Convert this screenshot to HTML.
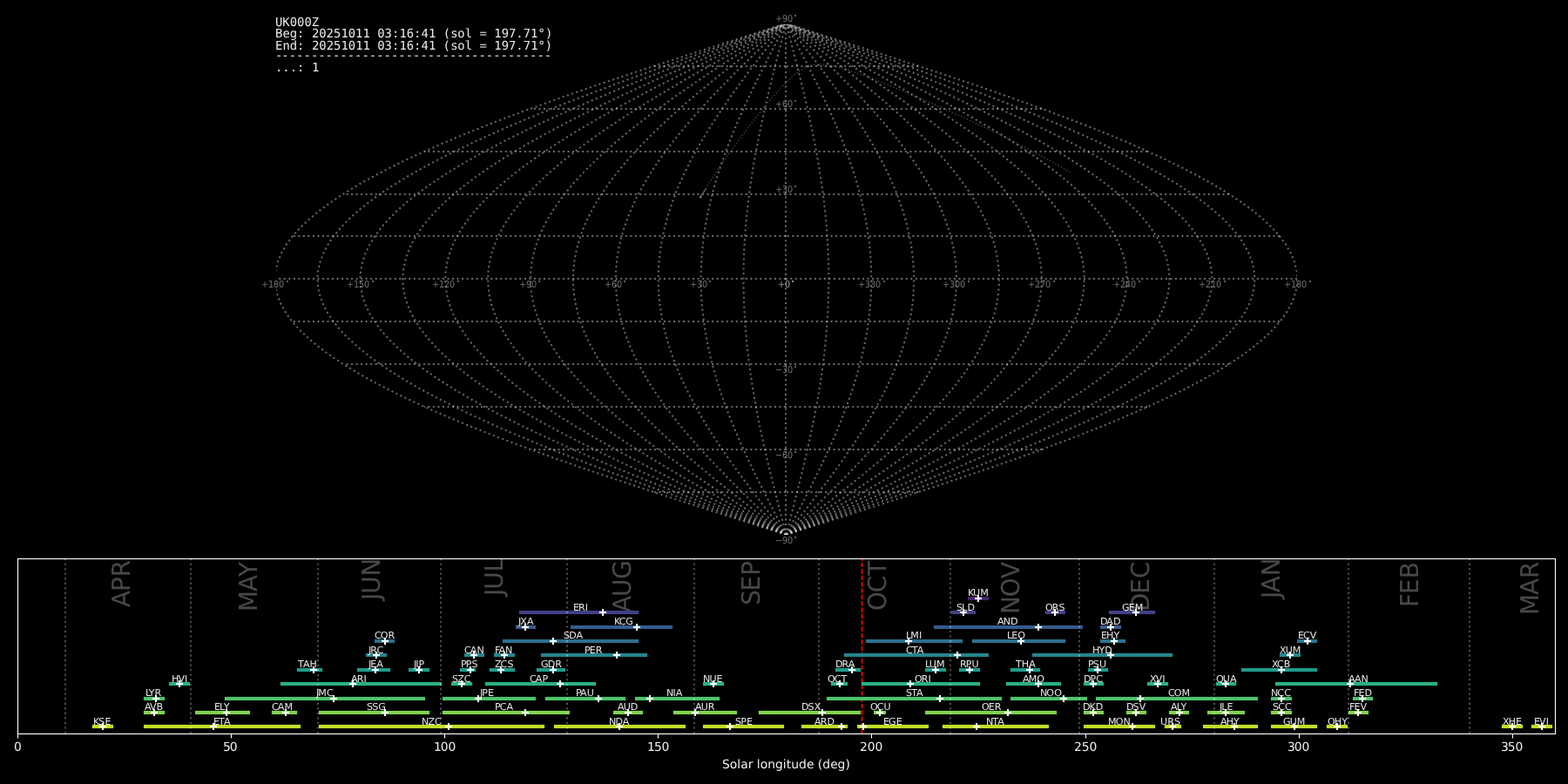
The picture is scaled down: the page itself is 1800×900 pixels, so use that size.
<!DOCTYPE html>
<html lang="en"><head><meta charset="utf-8"><title>Shower association UK000Z</title>
<style>html,body{margin:0;padding:0;background:#000;width:1800px;height:900px;overflow:hidden}svg text{white-space:pre;font-kerning:normal}</style></head>
<body>
<svg xmlns="http://www.w3.org/2000/svg" width="1800" height="900" viewBox="0 0 1800 900" text-rendering="geometricPrecision" shape-rendering="geometricPrecision" style="display:block;position:absolute;left:0;top:0;will-change:transform"><clipPath id="c0"><rect x="317" y="28" width="1172" height="586"/></clipPath><clipPath id="c1"><rect x="20" y="641" width="1765" height="201"/></clipPath>
<g clip-path="url(#c0)">
<path d="M1228.56 198.01L1219.59 192.72L1210.4 187.45L1200.98 182.19L1191.34 176.95L1181.52 171.73L1171.5 166.53L1161.32 161.36L1150.98 156.21L1140.5 151.09L1129.9 146.01L1119.2 140.96L1108.42 135.96L1097.57 131.01L1086.69 126.12L1075.8 121.3L1064.93 116.56L1054.11 111.91L1043.37 107.37L1032.77 102.96L1022.35 98.7L1012.15 94.62L1002.23 90.75L992.66 87.15L983.5 83.85L974.82 80.91L966.68 78.4L959.12 76.37L952.17 74.9L945.83 74.04L940.06 73.8L934.81 74.22L929.97 75.27L925.46 76.9L921.2 79.07L917.09 81.71L913.09 84.76L909.15 88.15L905.24 91.84L901.34 95.77L897.43 99.9L893.52 104.21L889.6 108.66L885.66 113.24L881.72 117.91L877.77 122.68L873.83 127.52L869.88 132.43L865.94 137.39L862.02 142.41L858.11 147.46L854.22 152.56L850.35 157.69L846.52 162.84L842.72 168.02L838.96 173.23L835.24 178.46L831.56 183.7L827.94 188.96L824.37 194.24L820.86 199.53L817.41 204.83L814.03 210.15L810.72 215.47" fill="none" stroke="#666666" stroke-opacity="0.7" stroke-width="1.3889" stroke-dasharray="1.3889 2.2917" stroke-linejoin="round"/>
<path d="M902 614L902 604L902 594L902 584L902 575L902 565L902 555L902 545L902 536L902 526L902 516L902 506L902 496L902 487L902 477L902 467L902 457L902 447L902 438L902 428L902 418L902 408L902 399L902 389L902 379L902 369L902 359L902 350L902 340L902 330L902 320L902 311L902 301L902 291L902 281L902 271L902 262L902 252L902 242L902 232L902 223L902 213L902 203L902 193L902 183L902 174L902 164L902 154L902 144L902 135L902 125L902 115L902 105L902 95L902 86L902 76L902 66L902 56L902 47L902 37L902 27" fill="none" stroke="#cccccc" stroke-opacity="0.5" stroke-width="2.0833" stroke-dasharray="2.0833 3.4375" stroke-linejoin="round"/>
<path d="M902.43 613.76L899.87 603.98L897.32 594.2L894.78 584.42L892.26 574.64L889.77 564.86L887.32 555.08L884.91 545.3L882.54 535.52L880.23 525.74L877.98 515.96L875.8 506.18L873.69 496.4L871.66 486.62L869.71 476.83L867.85 467.05L866.09 457.27L864.43 447.49L862.87 437.71L861.42 427.93L860.08 418.15L858.86 408.37L857.76 398.59L856.78 388.81L855.92 379.03L855.19 369.25L854.6 359.47L854.13 349.69L853.8 339.91L853.6 330.13L853.53 320.35L853.6 310.57L853.8 300.79L854.13 291.01L854.6 281.23L855.19 271.45L855.92 261.67L856.78 251.89L857.76 242.11L858.86 232.33L860.08 222.55L861.42 212.77L862.87 202.99L864.43 193.21L866.09 183.43L867.85 173.65L869.71 163.87L871.66 154.08L873.69 144.3L875.8 134.52L877.98 124.74L880.23 114.96L882.54 105.18L884.91 95.4L887.32 85.62L889.77 75.84L892.26 66.06L894.78 56.28L897.32 46.5L899.87 36.72L902.43 26.94" fill="none" stroke="#cccccc" stroke-opacity="0.5" stroke-width="2.0833" stroke-dasharray="2.0833 3.4375" stroke-linejoin="round"/>
<path d="M902.43 613.76L897.31 603.98L892.21 594.2L887.13 584.42L882.1 574.64L877.12 564.86L872.21 555.08L867.38 545.3L862.65 535.52L858.03 525.74L853.53 515.96L849.16 506.18L844.94 496.4L840.88 486.62L836.99 476.83L833.27 467.05L829.75 457.27L826.42 447.49L823.31 437.71L820.41 427.93L817.73 418.15L815.29 408.37L813.08 398.59L811.12 388.81L809.41 379.03L807.96 369.25L806.76 359.47L805.83 349.69L805.16 339.91L804.76 330.13L804.63 320.35L804.76 310.57L805.16 300.79L805.83 291.01L806.76 281.23L807.96 271.45L809.41 261.67L811.12 251.89L813.08 242.11L815.29 232.33L817.73 222.55L820.41 212.77L823.31 202.99L826.42 193.21L829.75 183.43L833.27 173.65L836.99 163.87L840.88 154.08L844.94 144.3L849.16 134.52L853.53 124.74L858.03 114.96L862.65 105.18L867.38 95.4L872.21 85.62L877.12 75.84L882.1 66.06L887.13 56.28L892.21 46.5L897.31 36.72L902.43 26.94" fill="none" stroke="#cccccc" stroke-opacity="0.5" stroke-width="2.0833" stroke-dasharray="2.0833 3.4375" stroke-linejoin="round"/>
<path d="M902.43 613.76L894.75 603.98L887.1 594.2L879.48 584.42L871.93 574.64L864.46 564.86L857.1 555.08L849.86 545.3L842.76 535.52L835.83 525.74L829.08 515.96L822.53 506.18L816.2 496.4L810.11 486.62L804.27 476.83L798.69 467.05L793.41 457.27L788.42 447.49L783.74 437.71L779.39 427.93L775.38 418.15L771.72 408.37L768.41 398.59L765.47 388.81L762.91 379.03L760.72 369.25L758.93 359.47L757.53 349.69L756.53 339.91L755.93 330.13L755.73 320.35L755.93 310.57L756.53 300.79L757.53 291.01L758.93 281.23L760.72 271.45L762.91 261.67L765.47 251.89L768.41 242.11L771.72 232.33L775.38 222.55L779.39 212.77L783.74 202.99L788.42 193.21L793.41 183.43L798.69 173.65L804.27 163.87L810.11 154.08L816.2 144.3L822.53 134.52L829.08 124.74L835.83 114.96L842.76 105.18L849.86 95.4L857.1 85.62L864.46 75.84L871.93 66.06L879.48 56.28L887.1 46.5L894.75 36.72L902.43 26.94" fill="none" stroke="#cccccc" stroke-opacity="0.5" stroke-width="2.0833" stroke-dasharray="2.0833 3.4375" stroke-linejoin="round"/>
<path d="M902.43 613.76L892.19 603.98L881.98 594.2L871.83 584.42L861.76 574.64L851.8 564.86L841.98 555.08L832.33 545.3L822.87 535.52L813.63 525.74L804.63 515.96L795.9 506.18L787.46 496.4L779.33 486.62L771.54 476.83L764.12 467.05L757.07 457.27L750.42 447.49L744.18 437.71L738.38 427.93L733.03 418.15L728.14 408.37L723.74 398.59L719.82 388.81L716.4 379.03L713.49 369.25L711.1 359.47L709.23 349.69L707.9 339.91L707.09 330.13L706.82 320.35L707.09 310.57L707.9 300.79L709.23 291.01L711.1 281.23L713.49 271.45L716.4 261.67L719.82 251.89L723.74 242.11L728.14 232.33L733.03 222.55L738.38 212.77L744.18 202.99L750.42 193.21L757.07 183.43L764.12 173.65L771.54 163.87L779.33 154.08L787.46 144.3L795.9 134.52L804.63 124.74L813.63 114.96L822.87 105.18L832.33 95.4L841.98 85.62L851.8 75.84L861.76 66.06L871.83 56.28L881.98 46.5L892.19 36.72L902.43 26.94" fill="none" stroke="#cccccc" stroke-opacity="0.5" stroke-width="2.0833" stroke-dasharray="2.0833 3.4375" stroke-linejoin="round"/>
<path d="M902.43 613.76L889.63 603.98L876.87 594.2L864.18 584.42L851.59 574.64L839.15 564.86L826.87 555.08L814.81 545.3L802.98 535.52L791.43 525.74L780.18 515.96L769.26 506.18L758.71 496.4L748.56 486.62L738.82 476.83L729.54 467.05L720.73 457.27L712.41 447.49L704.62 437.71L697.37 427.93L690.68 418.15L684.57 408.37L679.06 398.59L674.16 388.81L669.89 379.03L666.25 369.25L663.27 359.47L660.93 349.69L659.26 339.91L658.26 330.13L657.92 320.35L658.26 310.57L659.26 300.79L660.93 291.01L663.27 281.23L666.25 271.45L669.89 261.67L674.16 251.89L679.06 242.11L684.57 232.33L690.68 222.55L697.37 212.77L704.62 202.99L712.41 193.21L720.73 183.43L729.54 173.65L738.82 163.87L748.56 154.08L758.71 144.3L769.26 134.52L780.18 124.74L791.43 114.96L802.98 105.18L814.81 95.4L826.87 85.62L839.15 75.84L851.59 66.06L864.18 56.28L876.87 46.5L889.63 36.72L902.43 26.94" fill="none" stroke="#cccccc" stroke-opacity="0.5" stroke-width="2.0833" stroke-dasharray="2.0833 3.4375" stroke-linejoin="round"/>
<path d="M902.43 613.76L887.07 603.98L871.76 594.2L856.53 584.42L841.43 574.64L826.49 564.86L811.76 555.08L797.28 545.3L783.09 535.52L769.23 525.74L755.73 515.96L742.63 506.18L729.97 496.4L717.78 486.62L706.1 476.83L694.96 467.05L684.38 457.27L674.41 447.49L665.06 437.71L656.36 427.93L648.33 418.15L641 408.37L634.39 398.59L628.51 388.81L623.38 379.03L619.02 369.25L615.43 359.47L612.63 349.69L610.63 339.91L609.42 330.13L609.02 320.35L609.42 310.57L610.63 300.79L612.63 291.01L615.43 281.23L619.02 271.45L623.38 261.67L628.51 251.89L634.39 242.11L641 232.33L648.33 222.55L656.36 212.77L665.06 202.99L674.41 193.21L684.38 183.43L694.96 173.65L706.1 163.87L717.78 154.08L729.97 144.3L742.63 134.52L755.73 124.74L769.23 114.96L783.09 105.18L797.28 95.4L811.76 85.62L826.49 75.84L841.43 66.06L856.53 56.28L871.76 46.5L887.07 36.72L902.43 26.94" fill="none" stroke="#cccccc" stroke-opacity="0.5" stroke-width="2.0833" stroke-dasharray="2.0833 3.4375" stroke-linejoin="round"/>
<path d="M902.43 613.76L884.51 603.98L866.65 594.2L848.88 584.42L831.26 574.64L813.83 564.86L796.65 555.08L779.76 545.3L763.2 535.52L747.02 525.74L731.27 515.96L715.99 506.18L701.22 496.4L687.01 486.62L673.38 476.83L660.38 467.05L648.04 457.27L636.4 447.49L625.49 437.71L615.34 427.93L605.98 418.15L597.43 408.37L589.71 398.59L582.86 388.81L576.87 379.03L571.78 369.25L567.6 359.47L564.33 349.69L561.99 339.91L560.59 330.13L560.12 320.35L560.59 310.57L561.99 300.79L564.33 291.01L567.6 281.23L571.78 271.45L576.87 261.67L582.86 251.89L589.71 242.11L597.43 232.33L605.98 222.55L615.34 212.77L625.49 202.99L636.4 193.21L648.04 183.43L660.38 173.65L673.38 163.87L687.01 154.08L701.22 144.3L715.99 134.52L731.27 124.74L747.02 114.96L763.2 105.18L779.76 95.4L796.65 85.62L813.83 75.84L831.26 66.06L848.88 56.28L866.65 46.5L884.51 36.72L902.43 26.94" fill="none" stroke="#cccccc" stroke-opacity="0.5" stroke-width="2.0833" stroke-dasharray="2.0833 3.4375" stroke-linejoin="round"/>
<path d="M902.43 613.76L881.96 603.98L861.54 594.2L841.23 584.42L821.09 574.64L801.18 564.86L781.54 555.08L762.23 545.3L743.31 535.52L724.82 525.74L706.82 515.96L689.36 506.18L672.48 496.4L656.23 486.62L640.66 476.83L625.8 467.05L611.7 457.27L598.4 447.49L585.93 437.71L574.33 427.93L563.63 418.15L553.86 408.37L545.04 398.59L537.2 388.81L530.37 379.03L524.55 369.25L519.77 359.47L516.03 349.69L513.36 339.91L511.75 330.13L511.22 320.35L511.75 310.57L513.36 300.79L516.03 291.01L519.77 281.23L524.55 271.45L530.37 261.67L537.2 251.89L545.04 242.11L553.86 232.33L563.63 222.55L574.33 212.77L585.93 202.99L598.4 193.21L611.7 183.43L625.8 173.65L640.66 163.87L656.23 154.08L672.48 144.3L689.36 134.52L706.82 124.74L724.82 114.96L743.31 105.18L762.23 95.4L781.54 85.62L801.18 75.84L821.09 66.06L841.23 56.28L861.54 46.5L881.96 36.72L902.43 26.94" fill="none" stroke="#cccccc" stroke-opacity="0.5" stroke-width="2.0833" stroke-dasharray="2.0833 3.4375" stroke-linejoin="round"/>
<path d="M902.43 613.76L879.4 603.98L856.43 594.2L833.58 584.42L810.93 574.64L788.52 564.86L766.43 555.08L744.71 545.3L723.42 535.52L702.62 525.74L682.37 515.96L662.73 506.18L643.74 496.4L625.46 486.62L607.94 476.83L591.22 467.05L575.36 457.27L560.4 447.49L546.37 437.71L533.32 427.93L521.28 418.15L510.29 408.37L500.37 398.59L491.55 388.81L483.86 379.03L477.31 369.25L471.93 359.47L467.74 349.69L464.73 339.91L462.92 330.13L462.32 320.35L462.92 310.57L464.73 300.79L467.74 291.01L471.93 281.23L477.31 271.45L483.86 261.67L491.55 251.89L500.37 242.11L510.29 232.33L521.28 222.55L533.32 212.77L546.37 202.99L560.4 193.21L575.36 183.43L591.22 173.65L607.94 163.87L625.46 154.08L643.74 144.3L662.73 134.52L682.37 124.74L702.62 114.96L723.42 105.18L744.71 95.4L766.43 85.62L788.52 75.84L810.93 66.06L833.58 56.28L856.43 46.5L879.4 36.72L902.43 26.94" fill="none" stroke="#cccccc" stroke-opacity="0.5" stroke-width="2.0833" stroke-dasharray="2.0833 3.4375" stroke-linejoin="round"/>
<path d="M902.43 613.76L876.84 603.98L851.31 594.2L825.93 584.42L800.76 574.64L775.86 564.86L751.32 555.08L727.18 545.3L703.53 535.52L680.42 525.74L657.92 515.96L636.09 506.18L614.99 496.4L594.68 486.62L575.22 476.83L556.64 467.05L539.02 457.27L522.39 447.49L506.81 437.71L492.31 427.93L478.93 418.15L466.71 408.37L455.69 398.59L445.9 388.81L437.35 379.03L430.08 369.25L424.1 359.47L419.44 349.69L416.09 339.91L414.09 330.13L413.41 320.35L414.09 310.57L416.09 300.79L419.44 291.01L424.1 281.23L430.08 271.45L437.35 261.67L445.9 251.89L455.69 242.11L466.71 232.33L478.93 222.55L492.31 212.77L506.81 202.99L522.39 193.21L539.02 183.43L556.64 173.65L575.22 163.87L594.68 154.08L614.99 144.3L636.09 134.52L657.92 124.74L680.42 114.96L703.53 105.18L727.18 95.4L751.32 85.62L775.86 75.84L800.76 66.06L825.93 56.28L851.31 46.5L876.84 36.72L902.43 26.94" fill="none" stroke="#cccccc" stroke-opacity="0.5" stroke-width="2.0833" stroke-dasharray="2.0833 3.4375" stroke-linejoin="round"/>
<path d="M902.43 613.76L874.28 603.98L846.2 594.2L818.28 584.42L790.59 574.64L763.21 564.86L736.2 555.08L709.66 545.3L683.64 535.52L658.22 525.74L633.47 515.96L609.46 506.18L586.25 496.4L563.91 486.62L542.49 476.83L522.07 467.05L502.68 457.27L484.39 447.49L467.25 437.71L451.3 427.93L436.58 418.15L423.14 408.37L411.02 398.59L400.24 388.81L390.84 379.03L382.84 369.25L376.27 359.47L371.14 349.69L367.46 339.91L365.25 330.13L364.51 320.35L365.25 310.57L367.46 300.79L371.14 291.01L376.27 281.23L382.84 271.45L390.84 261.67L400.24 251.89L411.02 242.11L423.14 232.33L436.58 222.55L451.3 212.77L467.25 202.99L484.39 193.21L502.68 183.43L522.07 173.65L542.49 163.87L563.91 154.08L586.25 144.3L609.46 134.52L633.47 124.74L658.22 114.96L683.64 105.18L709.66 95.4L736.2 85.62L763.21 75.84L790.59 66.06L818.28 56.28L846.2 46.5L874.28 36.72L902.43 26.94" fill="none" stroke="#cccccc" stroke-opacity="0.5" stroke-width="2.0833" stroke-dasharray="2.0833 3.4375" stroke-linejoin="round"/>
<path d="M902.43 613.76L871.72 603.98L841.09 594.2L810.63 584.42L780.42 574.64L750.55 564.86L721.09 555.08L692.13 545.3L663.75 535.52L636.02 525.74L609.02 515.96L582.83 506.18L557.51 496.4L533.13 486.62L509.77 476.83L487.49 467.05L466.34 457.27L446.39 447.49L427.68 437.71L410.28 427.93L394.23 418.15L379.57 408.37L366.35 398.59L354.59 388.81L344.33 379.03L335.61 369.25L328.44 359.47L322.84 349.69L318.83 339.91L316.42 330.13L315.61 320.35L316.42 310.57L318.83 300.79L322.84 291.01L328.44 281.23L335.61 271.45L344.33 261.67L354.59 251.89L366.35 242.11L379.57 232.33L394.23 222.55L410.28 212.77L427.68 202.99L446.39 193.21L466.34 183.43L487.49 173.65L509.77 163.87L533.13 154.08L557.51 144.3L582.83 134.52L609.02 124.74L636.02 114.96L663.75 105.18L692.13 95.4L721.09 85.62L750.55 75.84L780.42 66.06L810.63 56.28L841.09 46.5L871.72 36.72L902.43 26.94" fill="none" stroke="#cccccc" stroke-opacity="0.5" stroke-width="2.0833" stroke-dasharray="2.0833 3.4375" stroke-linejoin="round"/>
<path d="M902.43 613.76L933.14 603.98L963.77 594.2L994.23 584.42L1024.44 574.64L1054.31 564.86L1083.77 555.08L1112.73 545.3L1141.11 535.52L1168.84 525.74L1195.84 515.96L1222.03 506.18L1247.35 496.4L1271.73 486.62L1295.09 476.83L1317.37 467.05L1338.52 457.27L1358.47 447.49L1377.18 437.71L1394.58 427.93L1410.63 418.15L1425.29 408.37L1438.51 398.59L1450.27 388.81L1460.53 379.03L1469.25 369.25L1476.42 359.47L1482.02 349.69L1486.03 339.91L1488.44 330.13L1489.25 320.35L1488.44 310.57L1486.03 300.79L1482.02 291.01L1476.42 281.23L1469.25 271.45L1460.53 261.67L1450.27 251.89L1438.51 242.11L1425.29 232.33L1410.63 222.55L1394.58 212.77L1377.18 202.99L1358.47 193.21L1338.52 183.43L1317.37 173.65L1295.09 163.87L1271.73 154.08L1247.35 144.3L1222.03 134.52L1195.84 124.74L1168.84 114.96L1141.11 105.18L1112.73 95.4L1083.77 85.62L1054.31 75.84L1024.44 66.06L994.23 56.28L963.77 46.5L933.14 36.72L902.43 26.94" fill="none" stroke="#cccccc" stroke-opacity="0.5" stroke-width="2.0833" stroke-dasharray="2.0833 3.4375" stroke-linejoin="round"/>
<path d="M902.43 613.76L930.58 603.98L958.66 594.2L986.58 584.42L1014.27 574.64L1041.65 564.86L1068.66 555.08L1095.2 545.3L1121.22 535.52L1146.64 525.74L1171.39 515.96L1195.4 506.18L1218.61 496.4L1240.95 486.62L1262.37 476.83L1282.79 467.05L1302.18 457.27L1320.47 447.49L1337.61 437.71L1353.56 427.93L1368.28 418.15L1381.72 408.37L1393.84 398.59L1404.62 388.81L1414.02 379.03L1422.02 369.25L1428.59 359.47L1433.72 349.69L1437.4 339.91L1439.61 330.13L1440.35 320.35L1439.61 310.57L1437.4 300.79L1433.72 291.01L1428.59 281.23L1422.02 271.45L1414.02 261.67L1404.62 251.89L1393.84 242.11L1381.72 232.33L1368.28 222.55L1353.56 212.77L1337.61 202.99L1320.47 193.21L1302.18 183.43L1282.79 173.65L1262.37 163.87L1240.95 154.08L1218.61 144.3L1195.4 134.52L1171.39 124.74L1146.64 114.96L1121.22 105.18L1095.2 95.4L1068.66 85.62L1041.65 75.84L1014.27 66.06L986.58 56.28L958.66 46.5L930.58 36.72L902.43 26.94" fill="none" stroke="#cccccc" stroke-opacity="0.5" stroke-width="2.0833" stroke-dasharray="2.0833 3.4375" stroke-linejoin="round"/>
<path d="M902.43 613.76L928.02 603.98L953.55 594.2L978.93 584.42L1004.1 574.64L1029 564.86L1053.54 555.08L1077.68 545.3L1101.33 535.52L1124.44 525.74L1146.94 515.96L1168.77 506.18L1189.87 496.4L1210.18 486.62L1229.64 476.83L1248.22 467.05L1265.84 457.27L1282.47 447.49L1298.05 437.71L1312.55 427.93L1325.93 418.15L1338.15 408.37L1349.17 398.59L1358.96 388.81L1367.51 379.03L1374.78 369.25L1380.76 359.47L1385.42 349.69L1388.77 339.91L1390.77 330.13L1391.44 320.35L1390.77 310.57L1388.77 300.79L1385.42 291.01L1380.76 281.23L1374.78 271.45L1367.51 261.67L1358.96 251.89L1349.17 242.11L1338.15 232.33L1325.93 222.55L1312.55 212.77L1298.05 202.99L1282.47 193.21L1265.84 183.43L1248.22 173.65L1229.64 163.87L1210.18 154.08L1189.87 144.3L1168.77 134.52L1146.94 124.74L1124.44 114.96L1101.33 105.18L1077.68 95.4L1053.54 85.62L1029 75.84L1004.1 66.06L978.93 56.28L953.55 46.5L928.02 36.72L902.43 26.94" fill="none" stroke="#cccccc" stroke-opacity="0.5" stroke-width="2.0833" stroke-dasharray="2.0833 3.4375" stroke-linejoin="round"/>
<path d="M902.43 613.76L925.46 603.98L948.43 594.2L971.28 584.42L993.93 574.64L1016.34 564.86L1038.43 555.08L1060.15 545.3L1081.44 535.52L1102.24 525.74L1122.49 515.96L1142.13 506.18L1161.12 496.4L1179.4 486.62L1196.92 476.83L1213.64 467.05L1229.5 457.27L1244.46 447.49L1258.49 437.71L1271.54 427.93L1283.58 418.15L1294.57 408.37L1304.49 398.59L1313.31 388.81L1321 379.03L1327.55 369.25L1332.93 359.47L1337.12 349.69L1340.13 339.91L1341.94 330.13L1342.54 320.35L1341.94 310.57L1340.13 300.79L1337.12 291.01L1332.93 281.23L1327.55 271.45L1321 261.67L1313.31 251.89L1304.49 242.11L1294.57 232.33L1283.58 222.55L1271.54 212.77L1258.49 202.99L1244.46 193.21L1229.5 183.43L1213.64 173.65L1196.92 163.87L1179.4 154.08L1161.12 144.3L1142.13 134.52L1122.49 124.74L1102.24 114.96L1081.44 105.18L1060.15 95.4L1038.43 85.62L1016.34 75.84L993.93 66.06L971.28 56.28L948.43 46.5L925.46 36.72L902.43 26.94" fill="none" stroke="#cccccc" stroke-opacity="0.5" stroke-width="2.0833" stroke-dasharray="2.0833 3.4375" stroke-linejoin="round"/>
<path d="M902.43 613.76L922.9 603.98L943.32 594.2L963.63 584.42L983.77 574.64L1003.68 564.86L1023.32 555.08L1042.63 545.3L1061.55 535.52L1080.04 525.74L1098.04 515.96L1115.5 506.18L1132.38 496.4L1148.63 486.62L1164.2 476.83L1179.06 467.05L1193.16 457.27L1206.46 447.49L1218.93 437.71L1230.53 427.93L1241.23 418.15L1251 408.37L1259.82 398.59L1267.66 388.81L1274.49 379.03L1280.31 369.25L1285.09 359.47L1288.83 349.69L1291.5 339.91L1293.11 330.13L1293.64 320.35L1293.11 310.57L1291.5 300.79L1288.83 291.01L1285.09 281.23L1280.31 271.45L1274.49 261.67L1267.66 251.89L1259.82 242.11L1251 232.33L1241.23 222.55L1230.53 212.77L1218.93 202.99L1206.46 193.21L1193.16 183.43L1179.06 173.65L1164.2 163.87L1148.63 154.08L1132.38 144.3L1115.5 134.52L1098.04 124.74L1080.04 114.96L1061.55 105.18L1042.63 95.4L1023.32 85.62L1003.68 75.84L983.77 66.06L963.63 56.28L943.32 46.5L922.9 36.72L902.43 26.94" fill="none" stroke="#cccccc" stroke-opacity="0.5" stroke-width="2.0833" stroke-dasharray="2.0833 3.4375" stroke-linejoin="round"/>
<path d="M902.43 613.76L920.35 603.98L938.21 594.2L955.98 584.42L973.6 574.64L991.03 564.86L1008.21 555.08L1025.1 545.3L1041.66 535.52L1057.84 525.74L1073.59 515.96L1088.87 506.18L1103.64 496.4L1117.85 486.62L1131.48 476.83L1144.48 467.05L1156.82 457.27L1168.46 447.49L1179.37 437.71L1189.52 427.93L1198.88 418.15L1207.43 408.37L1215.15 398.59L1222 388.81L1227.99 379.03L1233.08 369.25L1237.26 359.47L1240.53 349.69L1242.87 339.91L1244.27 330.13L1244.74 320.35L1244.27 310.57L1242.87 300.79L1240.53 291.01L1237.26 281.23L1233.08 271.45L1227.99 261.67L1222 251.89L1215.15 242.11L1207.43 232.33L1198.88 222.55L1189.52 212.77L1179.37 202.99L1168.46 193.21L1156.82 183.43L1144.48 173.65L1131.48 163.87L1117.85 154.08L1103.64 144.3L1088.87 134.52L1073.59 124.74L1057.84 114.96L1041.66 105.18L1025.1 95.4L1008.21 85.62L991.03 75.84L973.6 66.06L955.98 56.28L938.21 46.5L920.35 36.72L902.43 26.94" fill="none" stroke="#cccccc" stroke-opacity="0.5" stroke-width="2.0833" stroke-dasharray="2.0833 3.4375" stroke-linejoin="round"/>
<path d="M902.43 613.76L917.79 603.98L933.1 594.2L948.33 584.42L963.43 574.64L978.37 564.86L993.1 555.08L1007.58 545.3L1021.77 535.52L1035.63 525.74L1049.13 515.96L1062.23 506.18L1074.89 496.4L1087.08 486.62L1098.76 476.83L1109.9 467.05L1120.48 457.27L1130.45 447.49L1139.8 437.71L1148.5 427.93L1156.53 418.15L1163.86 408.37L1170.47 398.59L1176.35 388.81L1181.48 379.03L1185.84 369.25L1189.43 359.47L1192.23 349.69L1194.23 339.91L1195.44 330.13L1195.84 320.35L1195.44 310.57L1194.23 300.79L1192.23 291.01L1189.43 281.23L1185.84 271.45L1181.48 261.67L1176.35 251.89L1170.47 242.11L1163.86 232.33L1156.53 222.55L1148.5 212.77L1139.8 202.99L1130.45 193.21L1120.48 183.43L1109.9 173.65L1098.76 163.87L1087.08 154.08L1074.89 144.3L1062.23 134.52L1049.13 124.74L1035.63 114.96L1021.77 105.18L1007.58 95.4L993.1 85.62L978.37 75.84L963.43 66.06L948.33 56.28L933.1 46.5L917.79 36.72L902.43 26.94" fill="none" stroke="#cccccc" stroke-opacity="0.5" stroke-width="2.0833" stroke-dasharray="2.0833 3.4375" stroke-linejoin="round"/>
<path d="M902.43 613.76L915.23 603.98L927.99 594.2L940.68 584.42L953.27 574.64L965.71 564.86L977.99 555.08L990.05 545.3L1001.88 535.52L1013.43 525.74L1024.68 515.96L1035.6 506.18L1046.15 496.4L1056.3 486.62L1066.04 476.83L1075.32 467.05L1084.13 457.27L1092.45 447.49L1100.24 437.71L1107.49 427.93L1114.18 418.15L1120.29 408.37L1125.8 398.59L1130.7 388.81L1134.97 379.03L1138.61 369.25L1141.59 359.47L1143.93 349.69L1145.6 339.91L1146.6 330.13L1146.94 320.35L1146.6 310.57L1145.6 300.79L1143.93 291.01L1141.59 281.23L1138.61 271.45L1134.97 261.67L1130.7 251.89L1125.8 242.11L1120.29 232.33L1114.18 222.55L1107.49 212.77L1100.24 202.99L1092.45 193.21L1084.13 183.43L1075.32 173.65L1066.04 163.87L1056.3 154.08L1046.15 144.3L1035.6 134.52L1024.68 124.74L1013.43 114.96L1001.88 105.18L990.05 95.4L977.99 85.62L965.71 75.84L953.27 66.06L940.68 56.28L927.99 46.5L915.23 36.72L902.43 26.94" fill="none" stroke="#cccccc" stroke-opacity="0.5" stroke-width="2.0833" stroke-dasharray="2.0833 3.4375" stroke-linejoin="round"/>
<path d="M902.43 613.76L912.67 603.98L922.88 594.2L933.03 584.42L943.1 574.64L953.06 564.86L962.88 555.08L972.53 545.3L981.99 535.52L991.23 525.74L1000.23 515.96L1008.96 506.18L1017.4 496.4L1025.53 486.62L1033.32 476.83L1040.74 467.05L1047.79 457.27L1054.44 447.49L1060.68 437.71L1066.48 427.93L1071.83 418.15L1076.72 408.37L1081.12 398.59L1085.04 388.81L1088.46 379.03L1091.37 369.25L1093.76 359.47L1095.63 349.69L1096.96 339.91L1097.77 330.13L1098.04 320.35L1097.77 310.57L1096.96 300.79L1095.63 291.01L1093.76 281.23L1091.37 271.45L1088.46 261.67L1085.04 251.89L1081.12 242.11L1076.72 232.33L1071.83 222.55L1066.48 212.77L1060.68 202.99L1054.44 193.21L1047.79 183.43L1040.74 173.65L1033.32 163.87L1025.53 154.08L1017.4 144.3L1008.96 134.52L1000.23 124.74L991.23 114.96L981.99 105.18L972.53 95.4L962.88 85.62L953.06 75.84L943.1 66.06L933.03 56.28L922.88 46.5L912.67 36.72L902.43 26.94" fill="none" stroke="#cccccc" stroke-opacity="0.5" stroke-width="2.0833" stroke-dasharray="2.0833 3.4375" stroke-linejoin="round"/>
<path d="M902.43 613.76L910.11 603.98L917.76 594.2L925.38 584.42L932.93 574.64L940.4 564.86L947.76 555.08L955 545.3L962.1 535.52L969.03 525.74L975.78 515.96L982.33 506.18L988.66 496.4L994.75 486.62L1000.59 476.83L1006.17 467.05L1011.45 457.27L1016.44 447.49L1021.12 437.71L1025.47 427.93L1029.48 418.15L1033.14 408.37L1036.45 398.59L1039.39 388.81L1041.95 379.03L1044.14 369.25L1045.93 359.47L1047.33 349.69L1048.33 339.91L1048.93 330.13L1049.13 320.35L1048.93 310.57L1048.33 300.79L1047.33 291.01L1045.93 281.23L1044.14 271.45L1041.95 261.67L1039.39 251.89L1036.45 242.11L1033.14 232.33L1029.48 222.55L1025.47 212.77L1021.12 202.99L1016.44 193.21L1011.45 183.43L1006.17 173.65L1000.59 163.87L994.75 154.08L988.66 144.3L982.33 134.52L975.78 124.74L969.03 114.96L962.1 105.18L955 95.4L947.76 85.62L940.4 75.84L932.93 66.06L925.38 56.28L917.76 46.5L910.11 36.72L902.43 26.94" fill="none" stroke="#cccccc" stroke-opacity="0.5" stroke-width="2.0833" stroke-dasharray="2.0833 3.4375" stroke-linejoin="round"/>
<path d="M902.43 613.76L907.55 603.98L912.65 594.2L917.73 584.42L922.76 574.64L927.74 564.86L932.65 555.08L937.48 545.3L942.21 535.52L946.83 525.74L951.33 515.96L955.7 506.18L959.92 496.4L963.98 486.62L967.87 476.83L971.59 467.05L975.11 457.27L978.44 447.49L981.55 437.71L984.45 427.93L987.13 418.15L989.57 408.37L991.78 398.59L993.74 388.81L995.45 379.03L996.9 369.25L998.1 359.47L999.03 349.69L999.7 339.91L1000.1 330.13L1000.23 320.35L1000.1 310.57L999.7 300.79L999.03 291.01L998.1 281.23L996.9 271.45L995.45 261.67L993.74 251.89L991.78 242.11L989.57 232.33L987.13 222.55L984.45 212.77L981.55 202.99L978.44 193.21L975.11 183.43L971.59 173.65L967.87 163.87L963.98 154.08L959.92 144.3L955.7 134.52L951.33 124.74L946.83 114.96L942.21 105.18L937.48 95.4L932.65 85.62L927.74 75.84L922.76 66.06L917.73 56.28L912.65 46.5L907.55 36.72L902.43 26.94" fill="none" stroke="#cccccc" stroke-opacity="0.5" stroke-width="2.0833" stroke-dasharray="2.0833 3.4375" stroke-linejoin="round"/>
<path d="M902.43 613.76L904.99 603.98L907.54 594.2L910.08 584.42L912.6 574.64L915.09 564.86L917.54 555.08L919.95 545.3L922.32 535.52L924.63 525.74L926.88 515.96L929.06 506.18L931.17 496.4L933.2 486.62L935.15 476.83L937.01 467.05L938.77 457.27L940.43 447.49L941.99 437.71L943.44 427.93L944.78 418.15L946 408.37L947.1 398.59L948.08 388.81L948.94 379.03L949.67 369.25L950.26 359.47L950.73 349.69L951.06 339.91L951.26 330.13L951.33 320.35L951.26 310.57L951.06 300.79L950.73 291.01L950.26 281.23L949.67 271.45L948.94 261.67L948.08 251.89L947.1 242.11L946 232.33L944.78 222.55L943.44 212.77L941.99 202.99L940.43 193.21L938.77 183.43L937.01 173.65L935.15 163.87L933.2 154.08L931.17 144.3L929.06 134.52L926.88 124.74L924.63 114.96L922.32 105.18L919.95 95.4L917.54 85.62L915.09 75.84L912.6 66.06L910.08 56.28L907.54 46.5L904.99 36.72L902.43 26.94" fill="none" stroke="#cccccc" stroke-opacity="0.5" stroke-width="2.0833" stroke-dasharray="2.0833 3.4375" stroke-linejoin="round"/>
<path d="M902 614L902 614L902 614L902 614L902 614L902 614L902 614L902 614L902 614L902 614L902 614L902 614L902 614L902 614L902 614L902 614L902 614L902 614L902 614L902 614L902 614L902 614L902 614L902 614L902 614L902 614" fill="none" stroke="#cccccc" stroke-opacity="0.5" stroke-width="2.0833" stroke-dasharray="2.0833 3.4375" stroke-linejoin="round"/>
<path d="M902 565L890 565L877 565L864 565L852 565L839 565L826 565L814 565L801 565L789 565L776 565L763 565L751 565" fill="none" stroke="#cccccc" stroke-opacity="0.5" stroke-width="2.0833" stroke-dasharray="2.0833 3.4375" stroke-linejoin="round"/>
<path d="M902 565L751 565" fill="none" stroke="#cccccc" stroke-opacity="0.0208" stroke-width="4" stroke-dasharray="2.0833 3.4375"/>
<path d="M1054 565L1042 565L1029 565L1016 565L1004 565L991 565L978 565L966 565L953 565L940 565L928 565L915 565L902 565" fill="none" stroke="#cccccc" stroke-opacity="0.5" stroke-width="2.0833" stroke-dasharray="2.0833 3.4375" stroke-linejoin="round"/>
<path d="M1054 565L902 565" fill="none" stroke="#cccccc" stroke-opacity="0.0208" stroke-width="4" stroke-dasharray="2.0833 3.4375"/>
<path d="M902 516L878 516L854 516L829 516L805 516L780 516L756 516L731 516L707 516L682 516L658 516L633 516L609 516" fill="none" stroke="#cccccc" stroke-opacity="0.5" stroke-width="2.0833" stroke-dasharray="2.0833 3.4375" stroke-linejoin="round"/>
<path d="M902 516L609 516" fill="none" stroke="#cccccc" stroke-opacity="0.0208" stroke-width="4" stroke-dasharray="2.0833 3.4375"/>
<path d="M1196 516L1171 516L1147 516L1122 516L1098 516L1074 516L1049 516L1025 516L1000 516L976 516L951 516L927 516L902 516" fill="none" stroke="#cccccc" stroke-opacity="0.5" stroke-width="2.0833" stroke-dasharray="2.0833 3.4375" stroke-linejoin="round"/>
<path d="M1196 516L902 516" fill="none" stroke="#cccccc" stroke-opacity="0.0208" stroke-width="4" stroke-dasharray="2.0833 3.4375"/>
<path d="M902 467L868 467L833 467L799 467L764 467L730 467L695 467L660 467L626 467L591 467L557 467L522 467L487 467" fill="none" stroke="#cccccc" stroke-opacity="0.5" stroke-width="2.0833" stroke-dasharray="2.0833 3.4375" stroke-linejoin="round"/>
<path d="M902 467L487 467" fill="none" stroke="#cccccc" stroke-opacity="0.0208" stroke-width="4" stroke-dasharray="2.0833 3.4375"/>
<path d="M1317 467L1283 467L1248 467L1214 467L1179 467L1144 467L1110 467L1075 467L1041 467L1006 467L972 467L937 467L902 467" fill="none" stroke="#cccccc" stroke-opacity="0.5" stroke-width="2.0833" stroke-dasharray="2.0833 3.4375" stroke-linejoin="round"/>
<path d="M1317 467L902 467" fill="none" stroke="#cccccc" stroke-opacity="0.0208" stroke-width="4" stroke-dasharray="2.0833 3.4375"/>
<path d="M902 418L860 418L818 418L775 418L733 418L691 418L648 418L606 418L564 418L521 418L479 418L437 418L394 418" fill="none" stroke="#cccccc" stroke-opacity="0.5" stroke-width="2.0833" stroke-dasharray="2.0833 3.4375" stroke-linejoin="round"/>
<path d="M902 418L394 418" fill="none" stroke="#cccccc" stroke-opacity="0.0208" stroke-width="4" stroke-dasharray="2.0833 3.4375"/>
<path d="M1411 418L1368 418L1326 418L1284 418L1241 418L1199 418L1157 418L1114 418L1072 418L1029 418L987 418L945 418L902 418" fill="none" stroke="#cccccc" stroke-opacity="0.5" stroke-width="2.0833" stroke-dasharray="2.0833 3.4375" stroke-linejoin="round"/>
<path d="M1411 418L902 418" fill="none" stroke="#cccccc" stroke-opacity="0.0208" stroke-width="4" stroke-dasharray="2.0833 3.4375"/>
<path d="M902 369L855 369L808 369L761 369L713 369L666 369L619 369L572 369L525 369L477 369L430 369L383 369L336 369" fill="none" stroke="#cccccc" stroke-opacity="0.5" stroke-width="2.0833" stroke-dasharray="2.0833 3.4375" stroke-linejoin="round"/>
<path d="M902 369L336 369" fill="none" stroke="#cccccc" stroke-opacity="0.0208" stroke-width="4" stroke-dasharray="2.0833 3.4375"/>
<path d="M1469 369L1422 369L1375 369L1328 369L1280 369L1233 369L1186 369L1139 369L1091 369L1044 369L997 369L950 369L902 369" fill="none" stroke="#cccccc" stroke-opacity="0.5" stroke-width="2.0833" stroke-dasharray="2.0833 3.4375" stroke-linejoin="round"/>
<path d="M1469 369L902 369" fill="none" stroke="#cccccc" stroke-opacity="0.0208" stroke-width="4" stroke-dasharray="2.0833 3.4375"/>
<path d="M902 320L854 320L805 320L756 320L707 320L658 320L609 320L560 320L511 320L462 320L413 320L365 320L316 320" fill="none" stroke="#cccccc" stroke-opacity="0.5" stroke-width="2.0833" stroke-dasharray="2.0833 3.4375" stroke-linejoin="round"/>
<path d="M902 320L316 320" fill="none" stroke="#cccccc" stroke-opacity="0.0208" stroke-width="4" stroke-dasharray="2.0833 3.4375"/>
<path d="M1489 320L1440 320L1391 320L1343 320L1294 320L1245 320L1196 320L1147 320L1098 320L1049 320L1000 320L951 320L902 320" fill="none" stroke="#cccccc" stroke-opacity="0.5" stroke-width="2.0833" stroke-dasharray="2.0833 3.4375" stroke-linejoin="round"/>
<path d="M1489 320L902 320" fill="none" stroke="#cccccc" stroke-opacity="0.0208" stroke-width="4" stroke-dasharray="2.0833 3.4375"/>
<path d="M902 271L855 271L808 271L761 271L713 271L666 271L619 271L572 271L525 271L477 271L430 271L383 271L336 271" fill="none" stroke="#cccccc" stroke-opacity="0.5" stroke-width="2.0833" stroke-dasharray="2.0833 3.4375" stroke-linejoin="round"/>
<path d="M902 271L336 271" fill="none" stroke="#cccccc" stroke-opacity="0.0208" stroke-width="4" stroke-dasharray="2.0833 3.4375"/>
<path d="M1469 271L1422 271L1375 271L1328 271L1280 271L1233 271L1186 271L1139 271L1091 271L1044 271L997 271L950 271L902 271" fill="none" stroke="#cccccc" stroke-opacity="0.5" stroke-width="2.0833" stroke-dasharray="2.0833 3.4375" stroke-linejoin="round"/>
<path d="M1469 271L902 271" fill="none" stroke="#cccccc" stroke-opacity="0.0208" stroke-width="4" stroke-dasharray="2.0833 3.4375"/>
<path d="M902 223L860 223L818 223L775 223L733 223L691 223L648 223L606 223L564 223L521 223L479 223L437 223L394 223" fill="none" stroke="#cccccc" stroke-opacity="0.5" stroke-width="2.0833" stroke-dasharray="2.0833 3.4375" stroke-linejoin="round"/>
<path d="M902 223L394 223" fill="none" stroke="#cccccc" stroke-opacity="0.0208" stroke-width="4" stroke-dasharray="2.0833 3.4375"/>
<path d="M1411 223L1368 223L1326 223L1284 223L1241 223L1199 223L1157 223L1114 223L1072 223L1029 223L987 223L945 223L902 223" fill="none" stroke="#cccccc" stroke-opacity="0.5" stroke-width="2.0833" stroke-dasharray="2.0833 3.4375" stroke-linejoin="round"/>
<path d="M1411 223L902 223" fill="none" stroke="#cccccc" stroke-opacity="0.0208" stroke-width="4" stroke-dasharray="2.0833 3.4375"/>
<path d="M902 174L868 174L833 174L799 174L764 174L730 174L695 174L660 174L626 174L591 174L557 174L522 174L487 174" fill="none" stroke="#cccccc" stroke-opacity="0.5" stroke-width="2.0833" stroke-dasharray="2.0833 3.4375" stroke-linejoin="round"/>
<path d="M902 174L487 174" fill="none" stroke="#cccccc" stroke-opacity="0.0208" stroke-width="4" stroke-dasharray="2.0833 3.4375"/>
<path d="M1317 174L1283 174L1248 174L1214 174L1179 174L1144 174L1110 174L1075 174L1041 174L1006 174L972 174L937 174L902 174" fill="none" stroke="#cccccc" stroke-opacity="0.5" stroke-width="2.0833" stroke-dasharray="2.0833 3.4375" stroke-linejoin="round"/>
<path d="M1317 174L902 174" fill="none" stroke="#cccccc" stroke-opacity="0.0208" stroke-width="4" stroke-dasharray="2.0833 3.4375"/>
<path d="M902 125L878 125L854 125L829 125L805 125L780 125L756 125L731 125L707 125L682 125L658 125L633 125L609 125" fill="none" stroke="#cccccc" stroke-opacity="0.5" stroke-width="2.0833" stroke-dasharray="2.0833 3.4375" stroke-linejoin="round"/>
<path d="M902 125L609 125" fill="none" stroke="#cccccc" stroke-opacity="0.0208" stroke-width="4" stroke-dasharray="2.0833 3.4375"/>
<path d="M1196 125L1171 125L1147 125L1122 125L1098 125L1074 125L1049 125L1025 125L1000 125L976 125L951 125L927 125L902 125" fill="none" stroke="#cccccc" stroke-opacity="0.5" stroke-width="2.0833" stroke-dasharray="2.0833 3.4375" stroke-linejoin="round"/>
<path d="M1196 125L902 125" fill="none" stroke="#cccccc" stroke-opacity="0.0208" stroke-width="4" stroke-dasharray="2.0833 3.4375"/>
<path d="M902 76L890 76L877 76L864 76L852 76L839 76L826 76L814 76L801 76L789 76L776 76L763 76L751 76" fill="none" stroke="#cccccc" stroke-opacity="0.5" stroke-width="2.0833" stroke-dasharray="2.0833 3.4375" stroke-linejoin="round"/>
<path d="M902 76L751 76" fill="none" stroke="#cccccc" stroke-opacity="0.0208" stroke-width="4" stroke-dasharray="2.0833 3.4375"/>
<path d="M1054 76L1042 76L1029 76L1016 76L1004 76L991 76L978 76L966 76L953 76L940 76L928 76L915 76L902 76" fill="none" stroke="#cccccc" stroke-opacity="0.5" stroke-width="2.0833" stroke-dasharray="2.0833 3.4375" stroke-linejoin="round"/>
<path d="M1054 76L902 76" fill="none" stroke="#cccccc" stroke-opacity="0.0208" stroke-width="4" stroke-dasharray="2.0833 3.4375"/>
<path d="M902 27L902 27L902 27L902 27L902 27L902 27L902 27L902 27L902 27L902 27L902 27L902 27L902 27L902 27L902 27L902 27L902 27L902 27L902 27L902 27L902 27L902 27L902 27L902 27L902 27L902 27" fill="none" stroke="#cccccc" stroke-opacity="0.5" stroke-width="2.0833" stroke-dasharray="2.0833 3.4375" stroke-linejoin="round"/>
</g>
<text transform="translate(0 624) scale(1 1.12)" x="889.91 898.05 903.97" xml:space="preserve" font-family="'DejaVu Sans','Liberation Sans',sans-serif" font-size="9.722" fill="#808080" fill-opacity="0.886">−90<tspan x="911.5" y="-2.6786" font-size="6.2" fill="#b0b0b0" fill-opacity="1">°</tspan></text>
<text transform="translate(0 526) scale(1 1.12)" x="889.88 898.02 903.94" xml:space="preserve" font-family="'DejaVu Sans','Liberation Sans',sans-serif" font-size="9.722" fill="#808080" fill-opacity="0.886">−60<tspan x="911.5" y="-2.6786" font-size="6.2" fill="#b0b0b0" fill-opacity="1">°</tspan></text>
<text transform="translate(0 428) scale(1 1.12)" x="889.94 898.08 904" xml:space="preserve" font-family="'DejaVu Sans','Liberation Sans',sans-serif" font-size="9.722" fill="#808080" fill-opacity="0.886">−30<tspan x="911.5" y="-2.6786" font-size="6.2" fill="#b0b0b0" fill-opacity="1">°</tspan></text>
<text transform="translate(0 330) scale(1 1.12)" x="893.02 900.91" xml:space="preserve" font-family="'DejaVu Sans','Liberation Sans',sans-serif" font-size="9.722" fill="#808080" fill-opacity="0.886">+0<tspan x="908.5" y="-2.6786" font-size="6.2" fill="#b0b0b0" fill-opacity="1">°</tspan></text>
<text transform="translate(0 221) scale(1 1.12)" x="890.07 897.96 903.88" xml:space="preserve" font-family="'DejaVu Sans','Liberation Sans',sans-serif" font-size="9.722" fill="#808080" fill-opacity="0.886">+30<tspan x="911.5" y="-2.6786" font-size="6.2" fill="#b0b0b0" fill-opacity="1">°</tspan></text>
<text transform="translate(0 123) scale(1 1.12)" x="890.04 897.93 904.1" xml:space="preserve" font-family="'DejaVu Sans','Liberation Sans',sans-serif" font-size="9.722" fill="#808080" fill-opacity="0.886">+60<tspan x="911.5" y="-2.6786" font-size="6.2" fill="#b0b0b0" fill-opacity="1">°</tspan></text>
<text transform="translate(0 25) scale(1 1.12)" x="890.08 897.97 903.89" xml:space="preserve" font-family="'DejaVu Sans','Liberation Sans',sans-serif" font-size="9.722" fill="#808080" fill-opacity="0.886">+90<tspan x="911.5" y="-2.6786" font-size="6.2" fill="#b0b0b0" fill-opacity="1">°</tspan></text>
<text transform="translate(0 330) scale(1 1.12)" x="893.02 900.91" xml:space="preserve" font-family="'DejaVu Sans','Liberation Sans',sans-serif" font-size="9.722" fill="#808080" fill-opacity="0.886">+0<tspan x="908.5" y="-2.6786" font-size="6.2" fill="#b0b0b0" fill-opacity="1">°</tspan></text>
<text transform="translate(0 330) scale(1 1.12)" x="792.11 800 805.92" xml:space="preserve" font-family="'DejaVu Sans','Liberation Sans',sans-serif" font-size="9.722" fill="#808080" fill-opacity="0.886">+30<tspan x="813.5" y="-2.6786" font-size="6.2" fill="#b0b0b0" fill-opacity="1">°</tspan></text>
<text transform="translate(0 330) scale(1 1.12)" x="694.1 701.99 707.91" xml:space="preserve" font-family="'DejaVu Sans','Liberation Sans',sans-serif" font-size="9.722" fill="#808080" fill-opacity="0.886">+60<tspan x="715.5" y="-2.6786" font-size="6.2" fill="#b0b0b0" fill-opacity="1">°</tspan></text>
<text transform="translate(0 330) scale(1 1.12)" x="596.06 603.95 610.12" xml:space="preserve" font-family="'DejaVu Sans','Liberation Sans',sans-serif" font-size="9.722" fill="#808080" fill-opacity="0.886">+90<tspan x="617.5" y="-2.6786" font-size="6.2" fill="#b0b0b0" fill-opacity="1">°</tspan></text>
<text transform="translate(0 330) scale(1 1.12)" x="495.9 504.04 509.96 515.9" xml:space="preserve" font-family="'DejaVu Sans','Liberation Sans',sans-serif" font-size="9.722" fill="#808080" fill-opacity="0.886">+120<tspan x="524.5" y="-2.6786" font-size="6.2" fill="#b0b0b0" fill-opacity="1">°</tspan></text>
<text transform="translate(0 330) scale(1 1.12)" x="397.96 406.1 412.02 417.96" xml:space="preserve" font-family="'DejaVu Sans','Liberation Sans',sans-serif" font-size="9.722" fill="#808080" fill-opacity="0.886">+150<tspan x="426.5" y="-2.6786" font-size="6.2" fill="#b0b0b0" fill-opacity="1">°</tspan></text>
<text transform="translate(0 330) scale(1 1.12)" x="299.88 308.02 313.94 319.88" xml:space="preserve" font-family="'DejaVu Sans','Liberation Sans',sans-serif" font-size="9.722" fill="#808080" fill-opacity="0.886">+180<tspan x="328.5" y="-2.6786" font-size="6.2" fill="#b0b0b0" fill-opacity="1">°</tspan></text>
<text transform="translate(0 330) scale(1 1.12)" x="1473.9 1482.04 1487.96 1493.9" xml:space="preserve" font-family="'DejaVu Sans','Liberation Sans',sans-serif" font-size="9.722" fill="#808080" fill-opacity="0.886">+180<tspan x="1502.5" y="-2.6786" font-size="6.2" fill="#b0b0b0" fill-opacity="1">°</tspan></text>
<text transform="translate(0 330) scale(1 1.12)" x="1375.98 1384.12 1390.04 1395.98" xml:space="preserve" font-family="'DejaVu Sans','Liberation Sans',sans-serif" font-size="9.722" fill="#808080" fill-opacity="0.886">+210<tspan x="1404.5" y="-2.6786" font-size="6.2" fill="#b0b0b0" fill-opacity="1">°</tspan></text>
<text transform="translate(0 330) scale(1 1.12)" x="1278.01 1285.9 1291.82 1298.01" xml:space="preserve" font-family="'DejaVu Sans','Liberation Sans',sans-serif" font-size="9.722" fill="#808080" fill-opacity="0.886">+240<tspan x="1306.5" y="-2.6786" font-size="6.2" fill="#b0b0b0" fill-opacity="1">°</tspan></text>
<text transform="translate(0 330) scale(1 1.12)" x="1179.9 1188.04 1193.96 1199.9" xml:space="preserve" font-family="'DejaVu Sans','Liberation Sans',sans-serif" font-size="9.722" fill="#808080" fill-opacity="0.886">+270<tspan x="1208.5" y="-2.6786" font-size="6.2" fill="#b0b0b0" fill-opacity="1">°</tspan></text>
<text transform="translate(0 330) scale(1 1.12)" x="1082.06 1089.95 1096.12 1102.06" xml:space="preserve" font-family="'DejaVu Sans','Liberation Sans',sans-serif" font-size="9.722" fill="#808080" fill-opacity="0.886">+300<tspan x="1110.5" y="-2.6786" font-size="6.2" fill="#b0b0b0" fill-opacity="1">°</tspan></text>
<text transform="translate(0 330) scale(1 1.12)" x="985 992.89 999.06 1005" xml:space="preserve" font-family="'DejaVu Sans','Liberation Sans',sans-serif" font-size="9.722" fill="#808080" fill-opacity="0.886">+330<tspan x="1013.5" y="-2.6786" font-size="6.2" fill="#b0b0b0" fill-opacity="1">°</tspan></text>
<g clip-path="url(#c0)">
<path d="M810.53 216.42L803.9 226.1" fill="none" stroke="#666666" stroke-width="1.3889" stroke-linecap="square" stroke-linejoin="round"/>
<path d="M804 226" fill="none" stroke="#8dd3c7" stroke-width="2.0833" stroke-linecap="square" stroke-linejoin="round"/>
<path d="M803.5 227.5L805.5 227.5L805.5 225.5L803.5 225.5Z" fill="#808080"/>
</g>
<text transform="translate(1468.63 687.7) rotate(-90) scale(1 1.03)" x="0.75 7.44 26.44" font-family="'DejaVu Sans','Liberation Sans',sans-serif" font-size="27.778" fill="#ffffff" fill-opacity="0.283">JAN</text>
<text transform="translate(1627.7 697.82) rotate(-90) scale(1 1.03)" x="0.75 15.72 33.5" font-family="'DejaVu Sans','Liberation Sans',sans-serif" font-size="27.778" fill="#ffffff" fill-opacity="0.283">FEB</text>
<text transform="translate(1765.68 706.4) rotate(-90) scale(1 1.03)" x="0.5 23.45 42.44" font-family="'DejaVu Sans','Liberation Sans',sans-serif" font-size="27.778" fill="#ffffff" fill-opacity="0.283">MAR</text>
<text transform="translate(148.67 697.85) rotate(-90) scale(1 1.03)" x="0.75 18.98 35.73" font-family="'DejaVu Sans','Liberation Sans',sans-serif" font-size="27.778" fill="#ffffff" fill-opacity="0.283">APR</text>
<text transform="translate(294.62 702.39) rotate(-90) scale(1 1.03)" x="0.5 23.45 40.28" font-family="'DejaVu Sans','Liberation Sans',sans-serif" font-size="27.778" fill="#ffffff" fill-opacity="0.283">MAY</text>
<text transform="translate(435.69 689.84) rotate(-90) scale(1 1.03)" x="0.75 8.19 28.25" font-family="'DejaVu Sans','Liberation Sans',sans-serif" font-size="27.778" fill="#ffffff" fill-opacity="0.283">JUN</text>
<text transform="translate(576.53 685.02) rotate(-90) scale(1 1.03)" x="1 8.19 28.5" font-family="'DejaVu Sans','Liberation Sans',sans-serif" font-size="27.778" fill="#ffffff" fill-opacity="0.283">JUL</text>
<text transform="translate(723.6 703.63) rotate(-90) scale(1 1.03)" x="0.75 18.73 38.81" font-family="'DejaVu Sans','Liberation Sans',sans-serif" font-size="27.778" fill="#ffffff" fill-opacity="0.283">AUG</text>
<text transform="translate(871.61 695.58) rotate(-90) scale(1 1.03)" x="0.75 17.11 34.91" font-family="'DejaVu Sans','Liberation Sans',sans-serif" font-size="27.778" fill="#ffffff" fill-opacity="0.283">SEP</text>
<text transform="translate(1016.66 701.71) rotate(-90) scale(1 1.03)" x="0.75 21.59 40.98" font-family="'DejaVu Sans','Liberation Sans',sans-serif" font-size="27.778" fill="#ffffff" fill-opacity="0.283">OCT</text>
<text transform="translate(1169.53 705.61) rotate(-90) scale(1 1.03)" x="0.5 20.27 41.62" font-family="'DejaVu Sans','Liberation Sans',sans-serif" font-size="27.778" fill="#ffffff" fill-opacity="0.283">NOV</text>
<text transform="translate(1318.52 702.66) rotate(-90) scale(1 1.03)" x="0.75 20.88 38.67" font-family="'DejaVu Sans','Liberation Sans',sans-serif" font-size="27.778" fill="#ffffff" fill-opacity="0.283">DEC</text>
<rect x="19.9444" y="842.5" width="1.1111" height="5" fill="#ffffff"/>
<text x="15.91" y="862" xml:space="preserve" font-family="'DejaVu Sans','Liberation Sans',sans-serif" font-size="13.889" fill="#ffffff" fill-opacity="0.938">0</text>
<rect x="264.9444" y="842.5" width="1.1111" height="5" fill="#ffffff"/>
<text x="255.89 263.7" y="862" xml:space="preserve" font-family="'DejaVu Sans','Liberation Sans',sans-serif" font-size="13.889" fill="#ffffff" fill-opacity="0.938">50</text>
<rect x="509.9444" y="842.5" width="1.1111" height="5" fill="#ffffff"/>
<text x="498.08 505.64 514.47" y="862" xml:space="preserve" font-family="'DejaVu Sans','Liberation Sans',sans-serif" font-size="13.889" fill="#ffffff" fill-opacity="0.938">100</text>
<rect x="754.9444" y="842.5" width="1.1111" height="5" fill="#ffffff"/>
<text x="743 751.06 759.39" y="862" xml:space="preserve" font-family="'DejaVu Sans','Liberation Sans',sans-serif" font-size="13.889" fill="#ffffff" fill-opacity="0.938">150</text>
<rect x="999.9444" y="842.5" width="1.1111" height="5" fill="#ffffff"/>
<text x="986.89 995.7 1004.53" y="862" xml:space="preserve" font-family="'DejaVu Sans','Liberation Sans',sans-serif" font-size="13.889" fill="#ffffff" fill-opacity="0.938">200</text>
<rect x="1245.9444" y="842.5" width="1.1111" height="5" fill="#ffffff"/>
<text x="1232.92 1241.73 1250.56" y="862" xml:space="preserve" font-family="'DejaVu Sans','Liberation Sans',sans-serif" font-size="13.889" fill="#ffffff" fill-opacity="0.938">250</text>
<rect x="1490.9444" y="842.5" width="1.1111" height="5" fill="#ffffff"/>
<text x="1478.04 1485.85 1494.43" y="862" xml:space="preserve" font-family="'DejaVu Sans','Liberation Sans',sans-serif" font-size="13.889" fill="#ffffff" fill-opacity="0.938">300</text>
<rect x="1735.9444" y="842.5" width="1.1111" height="5" fill="#ffffff"/>
<text x="1723.06 1730.87 1739.45" y="862" xml:space="preserve" font-family="'DejaVu Sans','Liberation Sans',sans-serif" font-size="13.889" fill="#ffffff" fill-opacity="0.938">350</text>
<text x="829.05 837.85 846.33 850.19 858.69 864.64 868.82 872.66 881.16 889.96 898.75 902.86 908.3 917.1 925.91 934.44 938.85 944.27 953.32 961.61 970.41" y="882" xml:space="preserve" font-family="'DejaVu Sans','Liberation Sans',sans-serif" font-size="13.889" fill="#ffffff" fill-opacity="0.938">Solar longitude (deg)</text>
<g clip-path="url(#c1)">
<path d="M989.5 842.5L989.5 792.5L989.5 741.5L989.5 691.5L989.5 641.5" fill="none" stroke="#ff0000" stroke-width="1.3889" stroke-dasharray="5.1389 2.2222" stroke-linejoin="round"/>
<path d="M989.5 842.5L989.5 792.5L989.5 741.5L989.5 691.5L989.5 641.5" fill="none" stroke="#ff0000" stroke-width="1.3889" stroke-dasharray="5.1389 2.2222" stroke-linejoin="round"/>
</g>
<rect x="19.9444" y="640.9444" width="1.1111" height="202.1111" fill="#ffffff"/>
<rect x="1784.9444" y="640.9444" width="1.1111" height="202.1111" fill="#ffffff"/>
<rect x="19.9444" y="841.9444" width="1766.1111" height="1.1111" fill="#ffffff"/>
<rect x="19.9444" y="640.9444" width="1766.1111" height="1.1111" fill="#ffffff"/>
<g clip-path="url(#c1)">
<rect x="105.9167" y="831.9167" width="24.1667" height="4.1667" fill="#bddf26"/>
</g>
<text transform="translate(0 832) scale(1 0.985)" x="107.01 113.29 120.59" xml:space="preserve" font-family="'DejaVu Sans','Liberation Sans',sans-serif" font-size="11.111" fill="#ffffff" fill-opacity="0.901">KSE</text>
<g clip-path="url(#c1)">
<rect x="164.9167" y="831.9167" width="180.1667" height="4.1667" fill="#bddf26"/>
</g>
<text transform="translate(0 832) scale(1 0.985)" x="244.89 250.91 257.08" xml:space="preserve" font-family="'DejaVu Sans','Liberation Sans',sans-serif" font-size="11.111" fill="#ffffff" fill-opacity="0.901">ETA</text>
<g clip-path="url(#c1)">
<rect x="365.9167" y="831.9167" width="259.1667" height="4.1667" fill="#bddf26"/>
</g>
<text transform="translate(0 832) scale(1 0.985)" x="484.12 491.42 499.03" xml:space="preserve" font-family="'DejaVu Sans','Liberation Sans',sans-serif" font-size="11.111" fill="#ffffff" fill-opacity="0.901">NZC</text>
<g clip-path="url(#c1)">
<rect x="635.9167" y="831.9167" width="151.1667" height="4.1667" fill="#bddf26"/>
</g>
<text transform="translate(0 832) scale(1 0.985)" x="698.93 706.48 714.84" xml:space="preserve" font-family="'DejaVu Sans','Liberation Sans',sans-serif" font-size="11.111" fill="#ffffff" fill-opacity="0.901">NDA</text>
<g clip-path="url(#c1)">
<rect x="806.9167" y="831.9167" width="93.1667" height="4.1667" fill="#bddf26"/>
</g>
<text transform="translate(0 832) scale(1 0.985)" x="843.91 850.21 856.91" xml:space="preserve" font-family="'DejaVu Sans','Liberation Sans',sans-serif" font-size="11.111" fill="#ffffff" fill-opacity="0.901">SPE</text>
<g clip-path="url(#c1)">
<rect x="919.9167" y="831.9167" width="53.1667" height="4.1667" fill="#bddf26"/>
</g>
<text transform="translate(0 832) scale(1 0.985)" x="935.11 941.7 949.42" xml:space="preserve" font-family="'DejaVu Sans','Liberation Sans',sans-serif" font-size="11.111" fill="#ffffff" fill-opacity="0.901">ARD</text>
<g clip-path="url(#c1)">
<rect x="983.9167" y="831.9167" width="82.1667" height="4.1667" fill="#bddf26"/>
</g>
<text transform="translate(0 832) scale(1 0.985)" x="1013.92 1019.94 1028.79" xml:space="preserve" font-family="'DejaVu Sans','Liberation Sans',sans-serif" font-size="11.111" fill="#ffffff" fill-opacity="0.901">EGE</text>
<g clip-path="url(#c1)">
<rect x="1081.9167" y="831.9167" width="122.1667" height="4.1667" fill="#bddf26"/>
</g>
<text transform="translate(0 832) scale(1 0.985)" x="1131.95 1139.25 1145.17" xml:space="preserve" font-family="'DejaVu Sans','Liberation Sans',sans-serif" font-size="11.111" fill="#ffffff" fill-opacity="0.901">NTA</text>
<g clip-path="url(#c1)">
<rect x="1243.9167" y="831.9167" width="82.1667" height="4.1667" fill="#bddf26"/>
</g>
<text transform="translate(0 832) scale(1 0.985)" x="1272.08 1280.66 1289.41" xml:space="preserve" font-family="'DejaVu Sans','Liberation Sans',sans-serif" font-size="11.111" fill="#ffffff" fill-opacity="0.901">MON</text>
<g clip-path="url(#c1)">
<rect x="1336.9167" y="831.9167" width="19.1667" height="4.1667" fill="#bddf26"/>
</g>
<text transform="translate(0 832) scale(1 0.985)" x="1332.01 1340.14 1348.1" xml:space="preserve" font-family="'DejaVu Sans','Liberation Sans',sans-serif" font-size="11.111" fill="#ffffff" fill-opacity="0.901">URS</text>
<g clip-path="url(#c1)">
<rect x="1380.9167" y="831.9167" width="63.1667" height="4.1667" fill="#bddf26"/>
</g>
<text transform="translate(0 832) scale(1 0.985)" x="1401.08 1407.67 1416.03" xml:space="preserve" font-family="'DejaVu Sans','Liberation Sans',sans-serif" font-size="11.111" fill="#ffffff" fill-opacity="0.901">AHY</text>
<g clip-path="url(#c1)">
<rect x="1458.9167" y="831.9167" width="53.1667" height="4.1667" fill="#bddf26"/>
</g>
<text transform="translate(0 832) scale(1 0.985)" x="1472.97 1480.81 1488.7" xml:space="preserve" font-family="'DejaVu Sans','Liberation Sans',sans-serif" font-size="11.111" fill="#ffffff" fill-opacity="0.901">GUM</text>
<g clip-path="url(#c1)">
<rect x="1522.9167" y="831.9167" width="24.1667" height="4.1667" fill="#bddf26"/>
</g>
<text transform="translate(0 832) scale(1 0.985)" x="1523.92 1531.65 1540.26" xml:space="preserve" font-family="'DejaVu Sans','Liberation Sans',sans-serif" font-size="11.111" fill="#ffffff" fill-opacity="0.901">OHY</text>
<g clip-path="url(#c1)">
<rect x="1723.9167" y="831.9167" width="24.1667" height="4.1667" fill="#bddf26"/>
</g>
<text transform="translate(0 832) scale(1 0.985)" x="1725.1 1731.71 1740.05" xml:space="preserve" font-family="'DejaVu Sans','Liberation Sans',sans-serif" font-size="11.111" fill="#ffffff" fill-opacity="0.901">XHE</text>
<g clip-path="url(#c1)">
<rect x="1757.9167" y="831.9167" width="24.1667" height="4.1667" fill="#bddf26"/>
</g>
<text transform="translate(0 832) scale(1 0.985)" x="1761.1 1767.12 1774.71" xml:space="preserve" font-family="'DejaVu Sans','Liberation Sans',sans-serif" font-size="11.111" fill="#ffffff" fill-opacity="0.901">EVI</text>
<g clip-path="url(#c1)">
<rect x="164.9167" y="815.9167" width="24.1667" height="4.1667" fill="#81d34d"/>
</g>
<text transform="translate(0 815) scale(1 0.985)" x="165.95 172.07 179.43" xml:space="preserve" font-family="'DejaVu Sans','Liberation Sans',sans-serif" font-size="11.111" fill="#ffffff" fill-opacity="0.901">AVB</text>
<g clip-path="url(#c1)">
<rect x="223.9167" y="815.9167" width="63.1667" height="4.1667" fill="#81d34d"/>
</g>
<text transform="translate(0 815) scale(1 0.985)" x="246.09 252.11 256.81" xml:space="preserve" font-family="'DejaVu Sans','Liberation Sans',sans-serif" font-size="11.111" fill="#ffffff" fill-opacity="0.901">ELY</text>
<g clip-path="url(#c1)">
<rect x="311.9167" y="815.9167" width="29.1667" height="4.1667" fill="#81d34d"/>
</g>
<text transform="translate(0 815) scale(1 0.985)" x="311.9 318.65 326.49" xml:space="preserve" font-family="'DejaVu Sans','Liberation Sans',sans-serif" font-size="11.111" fill="#ffffff" fill-opacity="0.901">CAM</text>
<g clip-path="url(#c1)">
<rect x="365.9167" y="815.9167" width="127.1667" height="4.1667" fill="#81d34d"/>
</g>
<text transform="translate(0 815) scale(1 0.985)" x="421.08 427.13 434.17" xml:space="preserve" font-family="'DejaVu Sans','Liberation Sans',sans-serif" font-size="11.111" fill="#ffffff" fill-opacity="0.901">SSG</text>
<g clip-path="url(#c1)">
<rect x="507.9167" y="815.9167" width="146.1667" height="4.1667" fill="#81d34d"/>
</g>
<text transform="translate(0 815) scale(1 0.985)" x="567.92 573.86 581.62" xml:space="preserve" font-family="'DejaVu Sans','Liberation Sans',sans-serif" font-size="11.111" fill="#ffffff" fill-opacity="0.901">PCA</text>
<g clip-path="url(#c1)">
<rect x="703.9167" y="815.9167" width="34.1667" height="4.1667" fill="#81d34d"/>
</g>
<text transform="translate(0 815) scale(1 0.985)" x="708.93 715.77 723.65" xml:space="preserve" font-family="'DejaVu Sans','Liberation Sans',sans-serif" font-size="11.111" fill="#ffffff" fill-opacity="0.901">AUD</text>
<g clip-path="url(#c1)">
<rect x="772.9167" y="815.9167" width="73.1667" height="4.1667" fill="#81d34d"/>
</g>
<text transform="translate(0 815) scale(1 0.985)" x="798.09 804.68 812.81" xml:space="preserve" font-family="'DejaVu Sans','Liberation Sans',sans-serif" font-size="11.111" fill="#ffffff" fill-opacity="0.901">AUR</text>
<g clip-path="url(#c1)">
<rect x="870.9167" y="815.9167" width="117.1667" height="4.1667" fill="#81d34d"/>
</g>
<text transform="translate(0 815) scale(1 0.985)" x="919.97 927.52 934.81" xml:space="preserve" font-family="'DejaVu Sans','Liberation Sans',sans-serif" font-size="11.111" fill="#ffffff" fill-opacity="0.901">DSX</text>
<g clip-path="url(#c1)">
<rect x="1002.9167" y="815.9167" width="14.1667" height="4.1667" fill="#81d34d"/>
</g>
<text transform="translate(0 815) scale(1 0.985)" x="999.01 1006.74 1014.51" xml:space="preserve" font-family="'DejaVu Sans','Liberation Sans',sans-serif" font-size="11.111" fill="#ffffff" fill-opacity="0.901">OCU</text>
<g clip-path="url(#c1)">
<rect x="1061.9167" y="815.9167" width="151.1667" height="4.1667" fill="#81d34d"/>
</g>
<text transform="translate(0 815) scale(1 0.985)" x="1126.93 1134.66 1141.68" xml:space="preserve" font-family="'DejaVu Sans','Liberation Sans',sans-serif" font-size="11.111" fill="#ffffff" fill-opacity="0.901">OER</text>
<g clip-path="url(#c1)">
<rect x="1243.9167" y="815.9167" width="23.1667" height="4.1667" fill="#81d34d"/>
</g>
<text transform="translate(0 815) scale(1 0.985)" x="1242.91 1250.46 1257.74" xml:space="preserve" font-family="'DejaVu Sans','Liberation Sans',sans-serif" font-size="11.111" fill="#ffffff" fill-opacity="0.901">DKD</text>
<g clip-path="url(#c1)">
<rect x="1292.9167" y="815.9167" width="23.1667" height="4.1667" fill="#81d34d"/>
</g>
<text transform="translate(0 815) scale(1 0.985)" x="1292.92 1300.47 1307.76" xml:space="preserve" font-family="'DejaVu Sans','Liberation Sans',sans-serif" font-size="11.111" fill="#ffffff" fill-opacity="0.901">DSV</text>
<g clip-path="url(#c1)">
<rect x="1341.9167" y="815.9167" width="23.1667" height="4.1667" fill="#81d34d"/>
</g>
<text transform="translate(0 815) scale(1 0.985)" x="1344.12 1350.71 1355.43" xml:space="preserve" font-family="'DejaVu Sans','Liberation Sans',sans-serif" font-size="11.111" fill="#ffffff" fill-opacity="0.901">ALY</text>
<g clip-path="url(#c1)">
<rect x="1385.9167" y="815.9167" width="43.1667" height="4.1667" fill="#81d34d"/>
</g>
<text transform="translate(0 815) scale(1 0.985)" x="1399.99 1402.26 1408.44" xml:space="preserve" font-family="'DejaVu Sans','Liberation Sans',sans-serif" font-size="11.111" fill="#ffffff" fill-opacity="0.901">JLE</text>
<g clip-path="url(#c1)">
<rect x="1458.9167" y="815.9167" width="24.1667" height="4.1667" fill="#81d34d"/>
</g>
<text transform="translate(0 815) scale(1 0.985)" x="1460.9 1467.2 1474.95" xml:space="preserve" font-family="'DejaVu Sans','Liberation Sans',sans-serif" font-size="11.111" fill="#ffffff" fill-opacity="0.901">SCC</text>
<g clip-path="url(#c1)">
<rect x="1547.9167" y="815.9167" width="23.1667" height="4.1667" fill="#81d34d"/>
</g>
<text transform="translate(0 815) scale(1 0.985)" x="1549.12 1554.49 1561.53" xml:space="preserve" font-family="'DejaVu Sans','Liberation Sans',sans-serif" font-size="11.111" fill="#ffffff" fill-opacity="0.901">FEV</text>
<g clip-path="url(#c1)">
<rect x="164.9167" y="799.9167" width="24.1667" height="4.1667" fill="#4ec36b"/>
</g>
<text transform="translate(0 799) scale(1 0.985)" x="166.92 170.87 177.4" xml:space="preserve" font-family="'DejaVu Sans','Liberation Sans',sans-serif" font-size="11.111" fill="#ffffff" fill-opacity="0.901">LYR</text>
<g clip-path="url(#c1)">
<rect x="257.9167" y="799.9167" width="230.1667" height="4.1667" fill="#4ec36b"/>
</g>
<text transform="translate(0 799) scale(1 0.985)" x="362.94 365.21 375.05" xml:space="preserve" font-family="'DejaVu Sans','Liberation Sans',sans-serif" font-size="11.111" fill="#ffffff" fill-opacity="0.901">JMC</text>
<g clip-path="url(#c1)">
<rect x="507.9167" y="799.9167" width="107.1667" height="4.1667" fill="#4ec36b"/>
</g>
<text transform="translate(0 799) scale(1 0.985)" x="550.91 553.18 559.88" xml:space="preserve" font-family="'DejaVu Sans','Liberation Sans',sans-serif" font-size="11.111" fill="#ffffff" fill-opacity="0.901">JPE</text>
<g clip-path="url(#c1)">
<rect x="625.9167" y="799.9167" width="92.1667" height="4.1667" fill="#4ec36b"/>
</g>
<text transform="translate(0 799) scale(1 0.985)" x="661.1 666.08 673.68" xml:space="preserve" font-family="'DejaVu Sans','Liberation Sans',sans-serif" font-size="11.111" fill="#ffffff" fill-opacity="0.901">PAU</text>
<g clip-path="url(#c1)">
<rect x="728.9167" y="799.9167" width="97.1667" height="4.1667" fill="#4ec36b"/>
</g>
<text transform="translate(0 799) scale(1 0.985)" x="765.03 772.58 775.86" xml:space="preserve" font-family="'DejaVu Sans','Liberation Sans',sans-serif" font-size="11.111" fill="#ffffff" fill-opacity="0.901">NIA</text>
<g clip-path="url(#c1)">
<rect x="948.9167" y="799.9167" width="201.1667" height="4.1667" fill="#4ec36b"/>
</g>
<text transform="translate(0 799) scale(1 0.985)" x="1040.04 1046.34 1052.01" xml:space="preserve" font-family="'DejaVu Sans','Liberation Sans',sans-serif" font-size="11.111" fill="#ffffff" fill-opacity="0.901">STA</text>
<g clip-path="url(#c1)">
<rect x="1159.9167" y="799.9167" width="88.1667" height="4.1667" fill="#4ec36b"/>
</g>
<text transform="translate(0 799) scale(1 0.985)" x="1194.12 1201.17 1210.17" xml:space="preserve" font-family="'DejaVu Sans','Liberation Sans',sans-serif" font-size="11.111" fill="#ffffff" fill-opacity="0.901">NOO</text>
<g clip-path="url(#c1)">
<rect x="1257.9167" y="799.9167" width="186.1667" height="4.1667" fill="#4ec36b"/>
</g>
<text transform="translate(0 799) scale(1 0.985)" x="1341.05 1347.8 1356.55" xml:space="preserve" font-family="'DejaVu Sans','Liberation Sans',sans-serif" font-size="11.111" fill="#ffffff" fill-opacity="0.901">COM</text>
<g clip-path="url(#c1)">
<rect x="1458.9167" y="799.9167" width="24.1667" height="4.1667" fill="#4ec36b"/>
</g>
<text transform="translate(0 799) scale(1 0.985)" x="1459.02 1466.32 1474.33" xml:space="preserve" font-family="'DejaVu Sans','Liberation Sans',sans-serif" font-size="11.111" fill="#ffffff" fill-opacity="0.901">NCC</text>
<g clip-path="url(#c1)">
<rect x="1552.9167" y="799.9167" width="23.1667" height="4.1667" fill="#4ec36b"/>
</g>
<text transform="translate(0 799) scale(1 0.985)" x="1553.92 1559.55 1566.58" xml:space="preserve" font-family="'DejaVu Sans','Liberation Sans',sans-serif" font-size="11.111" fill="#ffffff" fill-opacity="0.901">FED</text>
<g clip-path="url(#c1)">
<rect x="193.9167" y="782.9167" width="24.1667" height="4.1667" fill="#2ab07f"/>
</g>
<text transform="translate(0 783) scale(1 0.985)" x="197.09 204.43 212.04" xml:space="preserve" font-family="'DejaVu Sans','Liberation Sans',sans-serif" font-size="11.111" fill="#ffffff" fill-opacity="0.901">HVI</text>
<g clip-path="url(#c1)">
<rect x="321.9167" y="782.9167" width="185.1667" height="4.1667" fill="#2ab07f"/>
</g>
<text transform="translate(0 783) scale(1 0.985)" x="402.98 409.82 417.54" xml:space="preserve" font-family="'DejaVu Sans','Liberation Sans',sans-serif" font-size="11.111" fill="#ffffff" fill-opacity="0.901">ARI</text>
<g clip-path="url(#c1)">
<rect x="517.9167" y="782.9167" width="24.1667" height="4.1667" fill="#2ab07f"/>
</g>
<text transform="translate(0 783) scale(1 0.985)" x="518.9 525.2 532.81" xml:space="preserve" font-family="'DejaVu Sans','Liberation Sans',sans-serif" font-size="11.111" fill="#ffffff" fill-opacity="0.901">SZC</text>
<g clip-path="url(#c1)">
<rect x="556.9167" y="782.9167" width="127.1667" height="4.1667" fill="#2ab07f"/>
</g>
<text transform="translate(0 783) scale(1 0.985)" x="608.09 614.84 622.43" xml:space="preserve" font-family="'DejaVu Sans','Liberation Sans',sans-serif" font-size="11.111" fill="#ffffff" fill-opacity="0.901">CAP</text>
<g clip-path="url(#c1)">
<rect x="806.9167" y="782.9167" width="24.1667" height="4.1667" fill="#2ab07f"/>
</g>
<text transform="translate(0 783) scale(1 0.985)" x="807.11 814.41 822.55" xml:space="preserve" font-family="'DejaVu Sans','Liberation Sans',sans-serif" font-size="11.111" fill="#ffffff" fill-opacity="0.901">NUE</text>
<g clip-path="url(#c1)">
<rect x="953.9167" y="782.9167" width="19.1667" height="4.1667" fill="#2ab07f"/>
</g>
<text transform="translate(0 783) scale(1 0.985)" x="949.94 957.67 965.44" xml:space="preserve" font-family="'DejaVu Sans','Liberation Sans',sans-serif" font-size="11.111" fill="#ffffff" fill-opacity="0.901">OCT</text>
<g clip-path="url(#c1)">
<rect x="988.9167" y="782.9167" width="136.1667" height="4.1667" fill="#2ab07f"/>
</g>
<text transform="translate(0 783) scale(1 0.985)" x="1049.88 1057.86 1065.58" xml:space="preserve" font-family="'DejaVu Sans','Liberation Sans',sans-serif" font-size="11.111" fill="#ffffff" fill-opacity="0.901">ORI</text>
<g clip-path="url(#c1)">
<rect x="1154.9167" y="782.9167" width="63.1667" height="4.1667" fill="#2ab07f"/>
</g>
<text transform="translate(0 783) scale(1 0.985)" x="1174.06 1180.65 1190.23" xml:space="preserve" font-family="'DejaVu Sans','Liberation Sans',sans-serif" font-size="11.111" fill="#ffffff" fill-opacity="0.901">AMO</text>
<g clip-path="url(#c1)">
<rect x="1243.9167" y="782.9167" width="23.1667" height="4.1667" fill="#2ab07f"/>
</g>
<text transform="translate(0 783) scale(1 0.985)" x="1243.93 1251.48 1258.18" xml:space="preserve" font-family="'DejaVu Sans','Liberation Sans',sans-serif" font-size="11.111" fill="#ffffff" fill-opacity="0.901">DPC</text>
<g clip-path="url(#c1)">
<rect x="1316.9167" y="782.9167" width="24.1667" height="4.1667" fill="#2ab07f"/>
</g>
<text transform="translate(0 783) scale(1 0.985)" x="1319.91 1326.77 1334.36" xml:space="preserve" font-family="'DejaVu Sans','Liberation Sans',sans-serif" font-size="11.111" fill="#ffffff" fill-opacity="0.901">XVI</text>
<g clip-path="url(#c1)">
<rect x="1395.9167" y="782.9167" width="23.1667" height="4.1667" fill="#2ab07f"/>
</g>
<text transform="translate(0 783) scale(1 0.985)" x="1396 1403.73 1412.12" xml:space="preserve" font-family="'DejaVu Sans','Liberation Sans',sans-serif" font-size="11.111" fill="#ffffff" fill-opacity="0.901">QUA</text>
<g clip-path="url(#c1)">
<rect x="1463.9167" y="782.9167" width="186.1667" height="4.1667" fill="#2ab07f"/>
</g>
<text transform="translate(0 783) scale(1 0.985)" x="1548.07 1554.98 1562.57" xml:space="preserve" font-family="'DejaVu Sans','Liberation Sans',sans-serif" font-size="11.111" fill="#ffffff" fill-opacity="0.901">AAN</text>
<g clip-path="url(#c1)">
<rect x="340.9167" y="766.9167" width="29.1667" height="4.1667" fill="#1e9b8a"/>
</g>
<text transform="translate(0 766) scale(1 0.985)" x="341.9 348.07 355.42" xml:space="preserve" font-family="'DejaVu Sans','Liberation Sans',sans-serif" font-size="11.111" fill="#ffffff" fill-opacity="0.901">TAH</text>
<g clip-path="url(#c1)">
<rect x="409.9167" y="766.9167" width="38.1667" height="4.1667" fill="#1e9b8a"/>
</g>
<text transform="translate(0 766) scale(1 0.985)" x="423.11 425.13 432.14" xml:space="preserve" font-family="'DejaVu Sans','Liberation Sans',sans-serif" font-size="11.111" fill="#ffffff" fill-opacity="0.901">JEA</text>
<g clip-path="url(#c1)">
<rect x="468.9167" y="766.9167" width="24.1667" height="4.1667" fill="#1e9b8a"/>
</g>
<text transform="translate(0 766) scale(1 0.985)" x="475.07 477.34 480.62" xml:space="preserve" font-family="'DejaVu Sans','Liberation Sans',sans-serif" font-size="11.111" fill="#ffffff" fill-opacity="0.901">JIP</text>
<g clip-path="url(#c1)">
<rect x="527.9167" y="766.9167" width="18.1667" height="4.1667" fill="#1e9b8a"/>
</g>
<text transform="translate(0 766) scale(1 0.985)" x="529.05 534.74 541.44" xml:space="preserve" font-family="'DejaVu Sans','Liberation Sans',sans-serif" font-size="11.111" fill="#ffffff" fill-opacity="0.901">PPS</text>
<g clip-path="url(#c1)">
<rect x="561.9167" y="766.9167" width="29.1667" height="4.1667" fill="#1e9b8a"/>
</g>
<text transform="translate(0 766) scale(1 0.985)" x="568.07 574.43 582.43" xml:space="preserve" font-family="'DejaVu Sans','Liberation Sans',sans-serif" font-size="11.111" fill="#ffffff" fill-opacity="0.901">ZCS</text>
<g clip-path="url(#c1)">
<rect x="615.9167" y="766.9167" width="33.1667" height="4.1667" fill="#1e9b8a"/>
</g>
<text transform="translate(0 766) scale(1 0.985)" x="621.04 628.63 637.2" xml:space="preserve" font-family="'DejaVu Sans','Liberation Sans',sans-serif" font-size="11.111" fill="#ffffff" fill-opacity="0.901">GDR</text>
<g clip-path="url(#c1)">
<rect x="958.9167" y="766.9167" width="29.1667" height="4.1667" fill="#1e9b8a"/>
</g>
<text transform="translate(0 766) scale(1 0.985)" x="958.89 966.44 973.7" xml:space="preserve" font-family="'DejaVu Sans','Liberation Sans',sans-serif" font-size="11.111" fill="#ffffff" fill-opacity="0.901">DRA</text>
<g clip-path="url(#c1)">
<rect x="1061.9167" y="766.9167" width="24.1667" height="4.1667" fill="#1e9b8a"/>
</g>
<text transform="translate(0 766) scale(1 0.985)" x="1061.9 1066.78 1074.92" xml:space="preserve" font-family="'DejaVu Sans','Liberation Sans',sans-serif" font-size="11.111" fill="#ffffff" fill-opacity="0.901">LUM</text>
<g clip-path="url(#c1)">
<rect x="1100.9167" y="766.9167" width="24.1667" height="4.1667" fill="#1e9b8a"/>
</g>
<text transform="translate(0 766) scale(1 0.985)" x="1102.03 1108.75 1115.44" xml:space="preserve" font-family="'DejaVu Sans','Liberation Sans',sans-serif" font-size="11.111" fill="#ffffff" fill-opacity="0.901">RPU</text>
<g clip-path="url(#c1)">
<rect x="1159.9167" y="766.9167" width="34.1667" height="4.1667" fill="#1e9b8a"/>
</g>
<text transform="translate(0 766) scale(1 0.985)" x="1166.04 1172.82 1181.17" xml:space="preserve" font-family="'DejaVu Sans','Liberation Sans',sans-serif" font-size="11.111" fill="#ffffff" fill-opacity="0.901">THA</text>
<g clip-path="url(#c1)">
<rect x="1248.9167" y="766.9167" width="23.1667" height="4.1667" fill="#1e9b8a"/>
</g>
<text transform="translate(0 766) scale(1 0.985)" x="1249.05 1254.74 1262.05" xml:space="preserve" font-family="'DejaVu Sans','Liberation Sans',sans-serif" font-size="11.111" fill="#ffffff" fill-opacity="0.901">PSU</text>
<g clip-path="url(#c1)">
<rect x="1424.9167" y="766.9167" width="87.1667" height="4.1667" fill="#1e9b8a"/>
</g>
<text transform="translate(0 766) scale(1 0.985)" x="1460.08 1465.88 1473.63" xml:space="preserve" font-family="'DejaVu Sans','Liberation Sans',sans-serif" font-size="11.111" fill="#ffffff" fill-opacity="0.901">XCB</text>
<g clip-path="url(#c1)">
<rect x="419.9167" y="749.9167" width="24.1667" height="4.1667" fill="#25858e"/>
</g>
<text transform="translate(0 750) scale(1 0.985)" x="423.06 425.33 432.5" xml:space="preserve" font-family="'DejaVu Sans','Liberation Sans',sans-serif" font-size="11.111" fill="#ffffff" fill-opacity="0.901">JRC</text>
<g clip-path="url(#c1)">
<rect x="532.9167" y="749.9167" width="23.1667" height="4.1667" fill="#25858e"/>
</g>
<text transform="translate(0 750) scale(1 0.985)" x="532.97 539.72 547.56" xml:space="preserve" font-family="'DejaVu Sans','Liberation Sans',sans-serif" font-size="11.111" fill="#ffffff" fill-opacity="0.901">CAN</text>
<g clip-path="url(#c1)">
<rect x="566.9167" y="749.9167" width="24.1667" height="4.1667" fill="#25858e"/>
</g>
<text transform="translate(0 750) scale(1 0.985)" x="567.89 572.5 580.11" xml:space="preserve" font-family="'DejaVu Sans','Liberation Sans',sans-serif" font-size="11.111" fill="#ffffff" fill-opacity="0.901">FAN</text>
<g clip-path="url(#c1)">
<rect x="620.9167" y="749.9167" width="122.1667" height="4.1667" fill="#25858e"/>
</g>
<text transform="translate(0 750) scale(1 0.985)" x="670.91 676.85 683.86" xml:space="preserve" font-family="'DejaVu Sans','Liberation Sans',sans-serif" font-size="11.111" fill="#ffffff" fill-opacity="0.901">PER</text>
<g clip-path="url(#c1)">
<rect x="968.9167" y="749.9167" width="166.1667" height="4.1667" fill="#25858e"/>
</g>
<text transform="translate(0 750) scale(1 0.985)" x="1039.91 1046.66 1052.83" xml:space="preserve" font-family="'DejaVu Sans','Liberation Sans',sans-serif" font-size="11.111" fill="#ffffff" fill-opacity="0.901">CTA</text>
<g clip-path="url(#c1)">
<rect x="1184.9167" y="749.9167" width="161.1667" height="4.1667" fill="#25858e"/>
</g>
<text transform="translate(0 750) scale(1 0.985)" x="1253.9 1261.49 1268.28" xml:space="preserve" font-family="'DejaVu Sans','Liberation Sans',sans-serif" font-size="11.111" fill="#ffffff" fill-opacity="0.901">HYD</text>
<g clip-path="url(#c1)">
<rect x="1468.9167" y="749.9167" width="24.1667" height="4.1667" fill="#25858e"/>
</g>
<text transform="translate(0 750) scale(1 0.985)" x="1469.02 1475.63 1483.75" xml:space="preserve" font-family="'DejaVu Sans','Liberation Sans',sans-serif" font-size="11.111" fill="#ffffff" fill-opacity="0.901">XUM</text>
<g clip-path="url(#c1)">
<rect x="429.9167" y="733.9167" width="23.1667" height="4.1667" fill="#2d708e"/>
</g>
<text transform="translate(0 733) scale(1 0.985)" x="430.03 436.78 445.53" xml:space="preserve" font-family="'DejaVu Sans','Liberation Sans',sans-serif" font-size="11.111" fill="#ffffff" fill-opacity="0.901">COR</text>
<g clip-path="url(#c1)">
<rect x="576.9167" y="733.9167" width="156.1667" height="4.1667" fill="#2d708e"/>
</g>
<text transform="translate(0 733) scale(1 0.985)" x="647.05 653.35 661.46" xml:space="preserve" font-family="'DejaVu Sans','Liberation Sans',sans-serif" font-size="11.111" fill="#ffffff" fill-opacity="0.901">SDA</text>
<g clip-path="url(#c1)">
<rect x="993.9167" y="733.9167" width="111.1667" height="4.1667" fill="#2d708e"/>
</g>
<text transform="translate(0 733) scale(1 0.985)" x="1040.03 1045.22 1055.05" xml:space="preserve" font-family="'DejaVu Sans','Liberation Sans',sans-serif" font-size="11.111" fill="#ffffff" fill-opacity="0.901">LMI</text>
<g clip-path="url(#c1)">
<rect x="1115.9167" y="733.9167" width="107.1667" height="4.1667" fill="#2d708e"/>
</g>
<text transform="translate(0 733) scale(1 0.985)" x="1155.98 1161.17 1168.18" xml:space="preserve" font-family="'DejaVu Sans','Liberation Sans',sans-serif" font-size="11.111" fill="#ffffff" fill-opacity="0.901">LEO</text>
<g clip-path="url(#c1)">
<rect x="1262.9167" y="733.9167" width="29.1667" height="4.1667" fill="#2d708e"/>
</g>
<text transform="translate(0 733) scale(1 0.985)" x="1264.12 1269.89 1278.48" xml:space="preserve" font-family="'DejaVu Sans','Liberation Sans',sans-serif" font-size="11.111" fill="#ffffff" fill-opacity="0.901">EHY</text>
<g clip-path="url(#c1)">
<rect x="1488.9167" y="733.9167" width="23.1667" height="4.1667" fill="#2d708e"/>
</g>
<text transform="translate(0 733) scale(1 0.985)" x="1489.92 1495.94 1503.69" xml:space="preserve" font-family="'DejaVu Sans','Liberation Sans',sans-serif" font-size="11.111" fill="#ffffff" fill-opacity="0.901">ECV</text>
<g clip-path="url(#c1)">
<rect x="591.9167" y="717.9167" width="23.1667" height="4.1667" fill="#375a8c"/>
</g>
<text transform="translate(0 717) scale(1 0.985)" x="595.12 597.14 604.99" xml:space="preserve" font-family="'DejaVu Sans','Liberation Sans',sans-serif" font-size="11.111" fill="#ffffff" fill-opacity="0.901">JXA</text>
<g clip-path="url(#c1)">
<rect x="654.9167" y="717.9167" width="117.1667" height="4.1667" fill="#375a8c"/>
</g>
<text transform="translate(0 717) scale(1 0.985)" x="705 710.67 718.17" xml:space="preserve" font-family="'DejaVu Sans','Liberation Sans',sans-serif" font-size="11.111" fill="#ffffff" fill-opacity="0.901">KCG</text>
<g clip-path="url(#c1)">
<rect x="1071.9167" y="717.9167" width="171.1667" height="4.1667" fill="#375a8c"/>
</g>
<text transform="translate(0 717) scale(1 0.985)" x="1145.1 1151.69 1160.01" xml:space="preserve" font-family="'DejaVu Sans','Liberation Sans',sans-serif" font-size="11.111" fill="#ffffff" fill-opacity="0.901">AND</text>
<g clip-path="url(#c1)">
<rect x="1262.9167" y="717.9167" width="24.1667" height="4.1667" fill="#375a8c"/>
</g>
<text transform="translate(0 717) scale(1 0.985)" x="1262.91 1270.25 1278.11" xml:space="preserve" font-family="'DejaVu Sans','Liberation Sans',sans-serif" font-size="11.111" fill="#ffffff" fill-opacity="0.901">DAD</text>
<g clip-path="url(#c1)">
<rect x="595.9167" y="700.9167" width="137.1667" height="4.1667" fill="#424086"/>
</g>
<text transform="translate(0 701) scale(1 0.985)" x="658.03 664.05 671.76" xml:space="preserve" font-family="'DejaVu Sans','Liberation Sans',sans-serif" font-size="11.111" fill="#ffffff" fill-opacity="0.901">ERI</text>
<g clip-path="url(#c1)">
<rect x="1091.9167" y="700.9167" width="28.1667" height="4.1667" fill="#424086"/>
</g>
<text transform="translate(0 701) scale(1 0.985)" x="1098.09 1103.89 1110.57" xml:space="preserve" font-family="'DejaVu Sans','Liberation Sans',sans-serif" font-size="11.111" fill="#ffffff" fill-opacity="0.901">SLD</text>
<g clip-path="url(#c1)">
<rect x="1199.9167" y="700.9167" width="23.1667" height="4.1667" fill="#424086"/>
</g>
<text transform="translate(0 701) scale(1 0.985)" x="1200.01 1207.74 1215.46" xml:space="preserve" font-family="'DejaVu Sans','Liberation Sans',sans-serif" font-size="11.111" fill="#ffffff" fill-opacity="0.901">ORS</text>
<g clip-path="url(#c1)">
<rect x="1272.9167" y="700.9167" width="53.1667" height="4.1667" fill="#424086"/>
</g>
<text transform="translate(0 701) scale(1 0.985)" x="1287.97 1295.81 1302.84" xml:space="preserve" font-family="'DejaVu Sans','Liberation Sans',sans-serif" font-size="11.111" fill="#ffffff" fill-opacity="0.901">GEM</text>
<g clip-path="url(#c1)">
<rect x="1110.9167" y="684.9167" width="24.1667" height="4.1667" fill="#482475"/>
</g>
<text transform="translate(0 684) scale(1 0.985)" x="1111.12 1117.1 1125.23" xml:space="preserve" font-family="'DejaVu Sans','Liberation Sans',sans-serif" font-size="11.111" fill="#ffffff" fill-opacity="0.901">KUM</text>
<g clip-path="url(#c1)">
<path d="M1394 842L1394 792L1394 741L1394 691L1394 641" fill="none" stroke="#ffffff" stroke-opacity="0.3" stroke-width="2.0833" stroke-dasharray="2.0833 3.4375" stroke-linejoin="round"/>
<path d="M1548 842L1548 792L1548 741L1548 691L1548 641" fill="none" stroke="#ffffff" stroke-opacity="0.3" stroke-width="2.0833" stroke-dasharray="2.0833 3.4375" stroke-linejoin="round"/>
<path d="M1687 842L1687 792L1687 741L1687 691L1687 641" fill="none" stroke="#ffffff" stroke-opacity="0.3" stroke-width="2.0833" stroke-dasharray="2.0833 3.4375" stroke-linejoin="round"/>
<path d="M75 842L75 792L75 741L75 691L75 641" fill="none" stroke="#ffffff" stroke-opacity="0.3" stroke-width="2.0833" stroke-dasharray="2.0833 3.4375" stroke-linejoin="round"/>
<path d="M219 842L219 792L219 741L219 691L219 641" fill="none" stroke="#ffffff" stroke-opacity="0.3" stroke-width="2.0833" stroke-dasharray="2.0833 3.4375" stroke-linejoin="round"/>
<path d="M365 842L365 792L365 741L365 691L365 641" fill="none" stroke="#ffffff" stroke-opacity="0.3" stroke-width="2.0833" stroke-dasharray="2.0833 3.4375" stroke-linejoin="round"/>
<path d="M506 842L506 792L506 741L506 691L506 641" fill="none" stroke="#ffffff" stroke-opacity="0.3" stroke-width="2.0833" stroke-dasharray="2.0833 3.4375" stroke-linejoin="round"/>
<path d="M651 842L651 792L651 741L651 691L651 641" fill="none" stroke="#ffffff" stroke-opacity="0.3" stroke-width="2.0833" stroke-dasharray="2.0833 3.4375" stroke-linejoin="round"/>
<path d="M797 842L797 792L797 741L797 691L797 641" fill="none" stroke="#ffffff" stroke-opacity="0.3" stroke-width="2.0833" stroke-dasharray="2.0833 3.4375" stroke-linejoin="round"/>
<path d="M940 842L940 792L940 741L940 691L940 641" fill="none" stroke="#ffffff" stroke-opacity="0.3" stroke-width="2.0833" stroke-dasharray="2.0833 3.4375" stroke-linejoin="round"/>
<path d="M1091 842L1091 792L1091 741L1091 691L1091 641" fill="none" stroke="#ffffff" stroke-opacity="0.3" stroke-width="2.0833" stroke-dasharray="2.0833 3.4375" stroke-linejoin="round"/>
<path d="M1239 842L1239 792L1239 741L1239 691L1239 641" fill="none" stroke="#ffffff" stroke-opacity="0.3" stroke-width="2.0833" stroke-dasharray="2.0833 3.4375" stroke-linejoin="round"/>
<path d="M114 834L122 834M118 838L118 830" fill="#ffffff" stroke="#ffffff" stroke-width="2.0833" stroke-linejoin="round"/>
<path d="M114 834L122 834" fill="none" stroke="#ffffff" stroke-opacity="0.0417" stroke-width="4"/>
<path d="M241 834L249 834M245 838L245 830" fill="#ffffff" stroke="#ffffff" stroke-width="2.0833" stroke-linejoin="round"/>
<path d="M241 834L249 834" fill="none" stroke="#ffffff" stroke-opacity="0.0417" stroke-width="4"/>
<path d="M511 834L519 834M515 838L515 830" fill="#ffffff" stroke="#ffffff" stroke-width="2.0833" stroke-linejoin="round"/>
<path d="M511 834L519 834" fill="none" stroke="#ffffff" stroke-opacity="0.0417" stroke-width="4"/>
<path d="M707 834L715 834M711 838L711 830" fill="#ffffff" stroke="#ffffff" stroke-width="2.0833" stroke-linejoin="round"/>
<path d="M707 834L715 834" fill="none" stroke="#ffffff" stroke-opacity="0.0417" stroke-width="4"/>
<path d="M834 834L842 834M838 838L838 830" fill="#ffffff" stroke="#ffffff" stroke-width="2.0833" stroke-linejoin="round"/>
<path d="M834 834L842 834" fill="none" stroke="#ffffff" stroke-opacity="0.0417" stroke-width="4"/>
<path d="M962 834L970 834M966 838L966 830" fill="#ffffff" stroke="#ffffff" stroke-width="2.0833" stroke-linejoin="round"/>
<path d="M962 834L970 834" fill="none" stroke="#ffffff" stroke-opacity="0.0417" stroke-width="4"/>
<path d="M987 834L995 834M991 838L991 830" fill="#ffffff" stroke="#ffffff" stroke-width="2.0833" stroke-linejoin="round"/>
<path d="M987 834L995 834" fill="none" stroke="#ffffff" stroke-opacity="0.0417" stroke-width="4"/>
<path d="M1117 834L1125 834M1121 838L1121 830" fill="#ffffff" stroke="#ffffff" stroke-width="2.0833" stroke-linejoin="round"/>
<path d="M1117 834L1125 834" fill="none" stroke="#ffffff" stroke-opacity="0.0417" stroke-width="4"/>
<path d="M1296 834L1304 834M1300 838L1300 830" fill="#ffffff" stroke="#ffffff" stroke-width="2.0833" stroke-linejoin="round"/>
<path d="M1296 834L1304 834" fill="none" stroke="#ffffff" stroke-opacity="0.0417" stroke-width="4"/>
<path d="M1342 834L1350 834M1346 838L1346 830" fill="#ffffff" stroke="#ffffff" stroke-width="2.0833" stroke-linejoin="round"/>
<path d="M1342 834L1350 834" fill="none" stroke="#ffffff" stroke-opacity="0.0417" stroke-width="4"/>
<path d="M1413 834L1421 834M1417 838L1417 830" fill="#ffffff" stroke="#ffffff" stroke-width="2.0833" stroke-linejoin="round"/>
<path d="M1413 834L1421 834" fill="none" stroke="#ffffff" stroke-opacity="0.0417" stroke-width="4"/>
<path d="M1482 834L1490 834M1486 838L1486 830" fill="#ffffff" stroke="#ffffff" stroke-width="2.0833" stroke-linejoin="round"/>
<path d="M1482 834L1490 834" fill="none" stroke="#ffffff" stroke-opacity="0.0417" stroke-width="4"/>
<path d="M1531 834L1539 834M1535 838L1535 830" fill="#ffffff" stroke="#ffffff" stroke-width="2.0833" stroke-linejoin="round"/>
<path d="M1531 834L1539 834" fill="none" stroke="#ffffff" stroke-opacity="0.0417" stroke-width="4"/>
<path d="M1732 834L1740 834M1736 838L1736 830" fill="#ffffff" stroke="#ffffff" stroke-width="2.0833" stroke-linejoin="round"/>
<path d="M1732 834L1740 834" fill="none" stroke="#ffffff" stroke-opacity="0.0417" stroke-width="4"/>
<path d="M1766 834L1774 834M1770 838L1770 830" fill="#ffffff" stroke="#ffffff" stroke-width="2.0833" stroke-linejoin="round"/>
<path d="M1766 834L1774 834" fill="none" stroke="#ffffff" stroke-opacity="0.0417" stroke-width="4"/>
<path d="M173 818L181 818M177 822L177 814" fill="#ffffff" stroke="#ffffff" stroke-width="2.0833" stroke-linejoin="round"/>
<path d="M173 818L181 818" fill="none" stroke="#ffffff" stroke-opacity="0.0417" stroke-width="4"/>
<path d="M256 818L264 818M260 822L260 814" fill="#ffffff" stroke="#ffffff" stroke-width="2.0833" stroke-linejoin="round"/>
<path d="M256 818L264 818" fill="none" stroke="#ffffff" stroke-opacity="0.0417" stroke-width="4"/>
<path d="M324 818L332 818M328 822L328 814" fill="#ffffff" stroke="#ffffff" stroke-width="2.0833" stroke-linejoin="round"/>
<path d="M324 818L332 818" fill="none" stroke="#ffffff" stroke-opacity="0.0417" stroke-width="4"/>
<path d="M438 818L446 818M442 822L442 814" fill="#ffffff" stroke="#ffffff" stroke-width="2.0833" stroke-linejoin="round"/>
<path d="M438 818L446 818" fill="none" stroke="#ffffff" stroke-opacity="0.0417" stroke-width="4"/>
<path d="M599 818L607 818M603 822L603 814" fill="#ffffff" stroke="#ffffff" stroke-width="2.0833" stroke-linejoin="round"/>
<path d="M599 818L607 818" fill="none" stroke="#ffffff" stroke-opacity="0.0417" stroke-width="4"/>
<path d="M717 818L725 818M721 822L721 814" fill="#ffffff" stroke="#ffffff" stroke-width="2.0833" stroke-linejoin="round"/>
<path d="M717 818L725 818" fill="none" stroke="#ffffff" stroke-opacity="0.0417" stroke-width="4"/>
<path d="M794 818L802 818M798 822L798 814" fill="#ffffff" stroke="#ffffff" stroke-width="2.0833" stroke-linejoin="round"/>
<path d="M794 818L802 818" fill="none" stroke="#ffffff" stroke-opacity="0.0417" stroke-width="4"/>
<path d="M940 818L948 818M944 822L944 814" fill="#ffffff" stroke="#ffffff" stroke-width="2.0833" stroke-linejoin="round"/>
<path d="M940 818L948 818" fill="none" stroke="#ffffff" stroke-opacity="0.0417" stroke-width="4"/>
<path d="M1006 818L1014 818M1010 822L1010 814" fill="#ffffff" stroke="#ffffff" stroke-width="2.0833" stroke-linejoin="round"/>
<path d="M1006 818L1014 818" fill="none" stroke="#ffffff" stroke-opacity="0.0417" stroke-width="4"/>
<path d="M1153 818L1161 818M1157 822L1157 814" fill="#ffffff" stroke="#ffffff" stroke-width="2.0833" stroke-linejoin="round"/>
<path d="M1153 818L1161 818" fill="none" stroke="#ffffff" stroke-opacity="0.0417" stroke-width="4"/>
<path d="M1251 818L1259 818M1255 822L1255 814" fill="#ffffff" stroke="#ffffff" stroke-width="2.0833" stroke-linejoin="round"/>
<path d="M1251 818L1259 818" fill="none" stroke="#ffffff" stroke-opacity="0.0417" stroke-width="4"/>
<path d="M1300 818L1308 818M1304 822L1304 814" fill="#ffffff" stroke="#ffffff" stroke-width="2.0833" stroke-linejoin="round"/>
<path d="M1300 818L1308 818" fill="none" stroke="#ffffff" stroke-opacity="0.0417" stroke-width="4"/>
<path d="M1350 818L1358 818M1354 822L1354 814" fill="#ffffff" stroke="#ffffff" stroke-width="2.0833" stroke-linejoin="round"/>
<path d="M1350 818L1358 818" fill="none" stroke="#ffffff" stroke-opacity="0.0417" stroke-width="4"/>
<path d="M1403 818L1411 818M1407 822L1407 814" fill="#ffffff" stroke="#ffffff" stroke-width="2.0833" stroke-linejoin="round"/>
<path d="M1403 818L1411 818" fill="none" stroke="#ffffff" stroke-opacity="0.0417" stroke-width="4"/>
<path d="M1467 818L1475 818M1471 822L1471 814" fill="#ffffff" stroke="#ffffff" stroke-width="2.0833" stroke-linejoin="round"/>
<path d="M1467 818L1475 818" fill="none" stroke="#ffffff" stroke-opacity="0.0417" stroke-width="4"/>
<path d="M1555 818L1563 818M1559 822L1559 814" fill="#ffffff" stroke="#ffffff" stroke-width="2.0833" stroke-linejoin="round"/>
<path d="M1555 818L1563 818" fill="none" stroke="#ffffff" stroke-opacity="0.0417" stroke-width="4"/>
<path d="M175 802L183 802M179 806L179 798" fill="#ffffff" stroke="#ffffff" stroke-width="2.0833" stroke-linejoin="round"/>
<path d="M175 802L183 802" fill="none" stroke="#ffffff" stroke-opacity="0.0417" stroke-width="4"/>
<path d="M379 802L387 802M383 806L383 798" fill="#ffffff" stroke="#ffffff" stroke-width="2.0833" stroke-linejoin="round"/>
<path d="M379 802L387 802" fill="none" stroke="#ffffff" stroke-opacity="0.0417" stroke-width="4"/>
<path d="M545 802L553 802M549 806L549 798" fill="#ffffff" stroke="#ffffff" stroke-width="2.0833" stroke-linejoin="round"/>
<path d="M545 802L553 802" fill="none" stroke="#ffffff" stroke-opacity="0.0417" stroke-width="4"/>
<path d="M683 802L691 802M687 806L687 798" fill="#ffffff" stroke="#ffffff" stroke-width="2.0833" stroke-linejoin="round"/>
<path d="M683 802L691 802" fill="none" stroke="#ffffff" stroke-opacity="0.0417" stroke-width="4"/>
<path d="M742 802L750 802M746 806L746 798" fill="#ffffff" stroke="#ffffff" stroke-width="2.0833" stroke-linejoin="round"/>
<path d="M742 802L750 802" fill="none" stroke="#ffffff" stroke-opacity="0.0417" stroke-width="4"/>
<path d="M1075 802L1083 802M1079 806L1079 798" fill="#ffffff" stroke="#ffffff" stroke-width="2.0833" stroke-linejoin="round"/>
<path d="M1075 802L1083 802" fill="none" stroke="#ffffff" stroke-opacity="0.0417" stroke-width="4"/>
<path d="M1217 802L1225 802M1221 806L1221 798" fill="#ffffff" stroke="#ffffff" stroke-width="2.0833" stroke-linejoin="round"/>
<path d="M1217 802L1225 802" fill="none" stroke="#ffffff" stroke-opacity="0.0417" stroke-width="4"/>
<path d="M1305 802L1313 802M1309 806L1309 798" fill="#ffffff" stroke="#ffffff" stroke-width="2.0833" stroke-linejoin="round"/>
<path d="M1305 802L1313 802" fill="none" stroke="#ffffff" stroke-opacity="0.0417" stroke-width="4"/>
<path d="M1467 802L1475 802M1471 806L1471 798" fill="#ffffff" stroke="#ffffff" stroke-width="2.0833" stroke-linejoin="round"/>
<path d="M1467 802L1475 802" fill="none" stroke="#ffffff" stroke-opacity="0.0417" stroke-width="4"/>
<path d="M1560 802L1568 802M1564 806L1564 798" fill="#ffffff" stroke="#ffffff" stroke-width="2.0833" stroke-linejoin="round"/>
<path d="M1560 802L1568 802" fill="none" stroke="#ffffff" stroke-opacity="0.0417" stroke-width="4"/>
<path d="M202 785L210 785M206 789L206 781" fill="#ffffff" stroke="#ffffff" stroke-width="2.0833" stroke-linejoin="round"/>
<path d="M202 785L210 785" fill="none" stroke="#ffffff" stroke-opacity="0.0417" stroke-width="4"/>
<path d="M401 785L409 785M405 789L405 781" fill="#ffffff" stroke="#ffffff" stroke-width="2.0833" stroke-linejoin="round"/>
<path d="M401 785L409 785" fill="none" stroke="#ffffff" stroke-opacity="0.0417" stroke-width="4"/>
<path d="M526 785L534 785M530 789L530 781" fill="#ffffff" stroke="#ffffff" stroke-width="2.0833" stroke-linejoin="round"/>
<path d="M526 785L534 785" fill="none" stroke="#ffffff" stroke-opacity="0.0417" stroke-width="4"/>
<path d="M639 785L647 785M643 789L643 781" fill="#ffffff" stroke="#ffffff" stroke-width="2.0833" stroke-linejoin="round"/>
<path d="M639 785L647 785" fill="none" stroke="#ffffff" stroke-opacity="0.0417" stroke-width="4"/>
<path d="M815 785L823 785M819 789L819 781" fill="#ffffff" stroke="#ffffff" stroke-width="2.0833" stroke-linejoin="round"/>
<path d="M815 785L823 785" fill="none" stroke="#ffffff" stroke-opacity="0.0417" stroke-width="4"/>
<path d="M960 785L968 785M964 789L964 781" fill="#ffffff" stroke="#ffffff" stroke-width="2.0833" stroke-linejoin="round"/>
<path d="M960 785L968 785" fill="none" stroke="#ffffff" stroke-opacity="0.0417" stroke-width="4"/>
<path d="M1041 785L1049 785M1045 789L1045 781" fill="#ffffff" stroke="#ffffff" stroke-width="2.0833" stroke-linejoin="round"/>
<path d="M1041 785L1049 785" fill="none" stroke="#ffffff" stroke-opacity="0.0417" stroke-width="4"/>
<path d="M1188 785L1196 785M1192 789L1192 781" fill="#ffffff" stroke="#ffffff" stroke-width="2.0833" stroke-linejoin="round"/>
<path d="M1188 785L1196 785" fill="none" stroke="#ffffff" stroke-opacity="0.0417" stroke-width="4"/>
<path d="M1251 785L1259 785M1255 789L1255 781" fill="#ffffff" stroke="#ffffff" stroke-width="2.0833" stroke-linejoin="round"/>
<path d="M1251 785L1259 785" fill="none" stroke="#ffffff" stroke-opacity="0.0417" stroke-width="4"/>
<path d="M1325 785L1333 785M1329 789L1329 781" fill="#ffffff" stroke="#ffffff" stroke-width="2.0833" stroke-linejoin="round"/>
<path d="M1325 785L1333 785" fill="none" stroke="#ffffff" stroke-opacity="0.0417" stroke-width="4"/>
<path d="M1403 785L1411 785M1407 789L1407 781" fill="#ffffff" stroke="#ffffff" stroke-width="2.0833" stroke-linejoin="round"/>
<path d="M1403 785L1411 785" fill="none" stroke="#ffffff" stroke-opacity="0.0417" stroke-width="4"/>
<path d="M1546 785L1554 785M1550 789L1550 781" fill="#ffffff" stroke="#ffffff" stroke-width="2.0833" stroke-linejoin="round"/>
<path d="M1546 785L1554 785" fill="none" stroke="#ffffff" stroke-opacity="0.0417" stroke-width="4"/>
<path d="M356 769L364 769M360 773L360 765" fill="#ffffff" stroke="#ffffff" stroke-width="2.0833" stroke-linejoin="round"/>
<path d="M356 769L364 769" fill="none" stroke="#ffffff" stroke-opacity="0.0417" stroke-width="4"/>
<path d="M427 769L435 769M431 773L431 765" fill="#ffffff" stroke="#ffffff" stroke-width="2.0833" stroke-linejoin="round"/>
<path d="M427 769L435 769" fill="none" stroke="#ffffff" stroke-opacity="0.0417" stroke-width="4"/>
<path d="M477 769L485 769M481 773L481 765" fill="#ffffff" stroke="#ffffff" stroke-width="2.0833" stroke-linejoin="round"/>
<path d="M477 769L485 769" fill="none" stroke="#ffffff" stroke-opacity="0.0417" stroke-width="4"/>
<path d="M536 769L544 769M540 773L540 765" fill="#ffffff" stroke="#ffffff" stroke-width="2.0833" stroke-linejoin="round"/>
<path d="M536 769L544 769" fill="none" stroke="#ffffff" stroke-opacity="0.0417" stroke-width="4"/>
<path d="M571 769L579 769M575 773L575 765" fill="#ffffff" stroke="#ffffff" stroke-width="2.0833" stroke-linejoin="round"/>
<path d="M571 769L579 769" fill="none" stroke="#ffffff" stroke-opacity="0.0417" stroke-width="4"/>
<path d="M631 769L639 769M635 773L635 765" fill="#ffffff" stroke="#ffffff" stroke-width="2.0833" stroke-linejoin="round"/>
<path d="M631 769L639 769" fill="none" stroke="#ffffff" stroke-opacity="0.0417" stroke-width="4"/>
<path d="M974 769L982 769M978 773L978 765" fill="#ffffff" stroke="#ffffff" stroke-width="2.0833" stroke-linejoin="round"/>
<path d="M974 769L982 769" fill="none" stroke="#ffffff" stroke-opacity="0.0417" stroke-width="4"/>
<path d="M1070 769L1078 769M1074 773L1074 765" fill="#ffffff" stroke="#ffffff" stroke-width="2.0833" stroke-linejoin="round"/>
<path d="M1070 769L1078 769" fill="none" stroke="#ffffff" stroke-opacity="0.0417" stroke-width="4"/>
<path d="M1109 769L1117 769M1113 773L1113 765" fill="#ffffff" stroke="#ffffff" stroke-width="2.0833" stroke-linejoin="round"/>
<path d="M1109 769L1117 769" fill="none" stroke="#ffffff" stroke-opacity="0.0417" stroke-width="4"/>
<path d="M1178 769L1186 769M1182 773L1182 765" fill="#ffffff" stroke="#ffffff" stroke-width="2.0833" stroke-linejoin="round"/>
<path d="M1178 769L1186 769" fill="none" stroke="#ffffff" stroke-opacity="0.0417" stroke-width="4"/>
<path d="M1256 769L1264 769M1260 773L1260 765" fill="#ffffff" stroke="#ffffff" stroke-width="2.0833" stroke-linejoin="round"/>
<path d="M1256 769L1264 769" fill="none" stroke="#ffffff" stroke-opacity="0.0417" stroke-width="4"/>
<path d="M1467 769L1475 769M1471 773L1471 765" fill="#ffffff" stroke="#ffffff" stroke-width="2.0833" stroke-linejoin="round"/>
<path d="M1467 769L1475 769" fill="none" stroke="#ffffff" stroke-opacity="0.0417" stroke-width="4"/>
<path d="M428 752L436 752M432 756L432 748" fill="#ffffff" stroke="#ffffff" stroke-width="2.0833" stroke-linejoin="round"/>
<path d="M428 752L436 752" fill="none" stroke="#ffffff" stroke-opacity="0.0417" stroke-width="4"/>
<path d="M540 752L548 752M544 756L544 748" fill="#ffffff" stroke="#ffffff" stroke-width="2.0833" stroke-linejoin="round"/>
<path d="M540 752L548 752" fill="none" stroke="#ffffff" stroke-opacity="0.0417" stroke-width="4"/>
<path d="M575 752L583 752M579 756L579 748" fill="#ffffff" stroke="#ffffff" stroke-width="2.0833" stroke-linejoin="round"/>
<path d="M575 752L583 752" fill="none" stroke="#ffffff" stroke-opacity="0.0417" stroke-width="4"/>
<path d="M704 752L712 752M708 756L708 748" fill="#ffffff" stroke="#ffffff" stroke-width="2.0833" stroke-linejoin="round"/>
<path d="M704 752L712 752" fill="none" stroke="#ffffff" stroke-opacity="0.0417" stroke-width="4"/>
<path d="M1095 752L1103 752M1099 756L1099 748" fill="#ffffff" stroke="#ffffff" stroke-width="2.0833" stroke-linejoin="round"/>
<path d="M1095 752L1103 752" fill="none" stroke="#ffffff" stroke-opacity="0.0417" stroke-width="4"/>
<path d="M1271 752L1279 752M1275 756L1275 748" fill="#ffffff" stroke="#ffffff" stroke-width="2.0833" stroke-linejoin="round"/>
<path d="M1271 752L1279 752" fill="none" stroke="#ffffff" stroke-opacity="0.0417" stroke-width="4"/>
<path d="M1477 752L1485 752M1481 756L1481 748" fill="#ffffff" stroke="#ffffff" stroke-width="2.0833" stroke-linejoin="round"/>
<path d="M1477 752L1485 752" fill="none" stroke="#ffffff" stroke-opacity="0.0417" stroke-width="4"/>
<path d="M438 736L446 736M442 740L442 732" fill="#ffffff" stroke="#ffffff" stroke-width="2.0833" stroke-linejoin="round"/>
<path d="M438 736L446 736" fill="none" stroke="#ffffff" stroke-opacity="0.0417" stroke-width="4"/>
<path d="M631 736L639 736M635 740L635 732" fill="#ffffff" stroke="#ffffff" stroke-width="2.0833" stroke-linejoin="round"/>
<path d="M631 736L639 736" fill="none" stroke="#ffffff" stroke-opacity="0.0417" stroke-width="4"/>
<path d="M1039 736L1047 736M1043 740L1043 732" fill="#ffffff" stroke="#ffffff" stroke-width="2.0833" stroke-linejoin="round"/>
<path d="M1039 736L1047 736" fill="none" stroke="#ffffff" stroke-opacity="0.0417" stroke-width="4"/>
<path d="M1168 736L1176 736M1172 740L1172 732" fill="#ffffff" stroke="#ffffff" stroke-width="2.0833" stroke-linejoin="round"/>
<path d="M1168 736L1176 736" fill="none" stroke="#ffffff" stroke-opacity="0.0417" stroke-width="4"/>
<path d="M1275 736L1283 736M1279 740L1279 732" fill="#ffffff" stroke="#ffffff" stroke-width="2.0833" stroke-linejoin="round"/>
<path d="M1275 736L1283 736" fill="none" stroke="#ffffff" stroke-opacity="0.0417" stroke-width="4"/>
<path d="M1497 736L1505 736M1501 740L1501 732" fill="#ffffff" stroke="#ffffff" stroke-width="2.0833" stroke-linejoin="round"/>
<path d="M1497 736L1505 736" fill="none" stroke="#ffffff" stroke-opacity="0.0417" stroke-width="4"/>
<path d="M599 720L607 720M603 724L603 716" fill="#ffffff" stroke="#ffffff" stroke-width="2.0833" stroke-linejoin="round"/>
<path d="M599 720L607 720" fill="none" stroke="#ffffff" stroke-opacity="0.0417" stroke-width="4"/>
<path d="M727 720L735 720M731 724L731 716" fill="#ffffff" stroke="#ffffff" stroke-width="2.0833" stroke-linejoin="round"/>
<path d="M727 720L735 720" fill="none" stroke="#ffffff" stroke-opacity="0.0417" stroke-width="4"/>
<path d="M1188 720L1196 720M1192 724L1192 716" fill="#ffffff" stroke="#ffffff" stroke-width="2.0833" stroke-linejoin="round"/>
<path d="M1188 720L1196 720" fill="none" stroke="#ffffff" stroke-opacity="0.0417" stroke-width="4"/>
<path d="M1271 720L1279 720M1275 724L1275 716" fill="#ffffff" stroke="#ffffff" stroke-width="2.0833" stroke-linejoin="round"/>
<path d="M1271 720L1279 720" fill="none" stroke="#ffffff" stroke-opacity="0.0417" stroke-width="4"/>
<path d="M688 703L696 703M692 707L692 699" fill="#ffffff" stroke="#ffffff" stroke-width="2.0833" stroke-linejoin="round"/>
<path d="M688 703L696 703" fill="none" stroke="#ffffff" stroke-opacity="0.0417" stroke-width="4"/>
<path d="M1102 703L1110 703M1106 707L1106 699" fill="#ffffff" stroke="#ffffff" stroke-width="2.0833" stroke-linejoin="round"/>
<path d="M1102 703L1110 703" fill="none" stroke="#ffffff" stroke-opacity="0.0417" stroke-width="4"/>
<path d="M1207 703L1215 703M1211 707L1211 699" fill="#ffffff" stroke="#ffffff" stroke-width="2.0833" stroke-linejoin="round"/>
<path d="M1207 703L1215 703" fill="none" stroke="#ffffff" stroke-opacity="0.0417" stroke-width="4"/>
<path d="M1300 703L1308 703M1304 707L1304 699" fill="#ffffff" stroke="#ffffff" stroke-width="2.0833" stroke-linejoin="round"/>
<path d="M1300 703L1308 703" fill="none" stroke="#ffffff" stroke-opacity="0.0417" stroke-width="4"/>
<path d="M1119 687L1127 687M1123 691L1123 683" fill="#ffffff" stroke="#ffffff" stroke-width="2.0833" stroke-linejoin="round"/>
<path d="M1119 687L1127 687" fill="none" stroke="#ffffff" stroke-opacity="0.0417" stroke-width="4"/>
</g>
<text x="316.08 324.17 332.78 340.88 349.49 357.85" y="30" xml:space="preserve" font-family="'DejaVu Sans Mono','Liberation Mono',monospace" font-size="13.889" fill="#ffffff" fill-opacity="0.923">UK000Z</text>
<text x="316.05 324.39 332.75 340.97 349.96 357.94 366.16 374.52 383.11 391.47 399.83 407.92 416.53 425.14 433.24 441.6 449.94 458.55 466.66 475 483.61 491.97 500.32 508.67 517.27 525.13 533.74 542.08 550.44 558.8 567.14 575.75 584.1 592.21 600.82 608.91 617.52 626.11" y="43" xml:space="preserve" font-family="'DejaVu Sans Mono','Liberation Mono',monospace" font-size="13.889" fill="#ffffff" fill-opacity="0.923">Beg: 20251011 03:16:41 (sol = 197.71°)</text>
<text x="316.12 324.46 332.82 340.92 349.78 357.89 366.23 374.84 382.93 391.54 399.65 408.24 416.6 424.96 433.31 441.54 450.01 458.62 466.73 475.07 483.43 492.04 500.14 508.49 517.34 525.2 533.81 541.9 550.51 558.62 567.21 575.82 583.92 592.28 600.64 609.23 617.59 625.68" y="57" xml:space="preserve" font-family="'DejaVu Sans Mono','Liberation Mono',monospace" font-size="13.889" fill="#ffffff" fill-opacity="0.923">End: 20251011 03:16:41 (sol = 197.71°)</text>
<text x="315.97 323.31 331.67 340.02 348.38 357.11 365.33 373.44 382.03 390.14 398.75 407.1 415.45 423.81 432.16 440.52 449.11 457.22 465.83 473.92 482.53 490.64 499.24 507.6 515.94 524.3 532.66 541 549.61 557.72 566.31 574.42 583.02 591.13 599.74 608.08 616.44 624.78" y="68" xml:space="preserve" font-family="'DejaVu Sans Mono','Liberation Mono',monospace" font-size="13.889" fill="#ffffff" fill-opacity="0.923">--------------------------------------</text>
<text x="316.1 324.19 332.8 340.9 349.51 358.12" y="82" xml:space="preserve" font-family="'DejaVu Sans Mono','Liberation Mono',monospace" font-size="13.889" fill="#ffffff" fill-opacity="0.923">...: 1</text>
</svg>
</body></html>
